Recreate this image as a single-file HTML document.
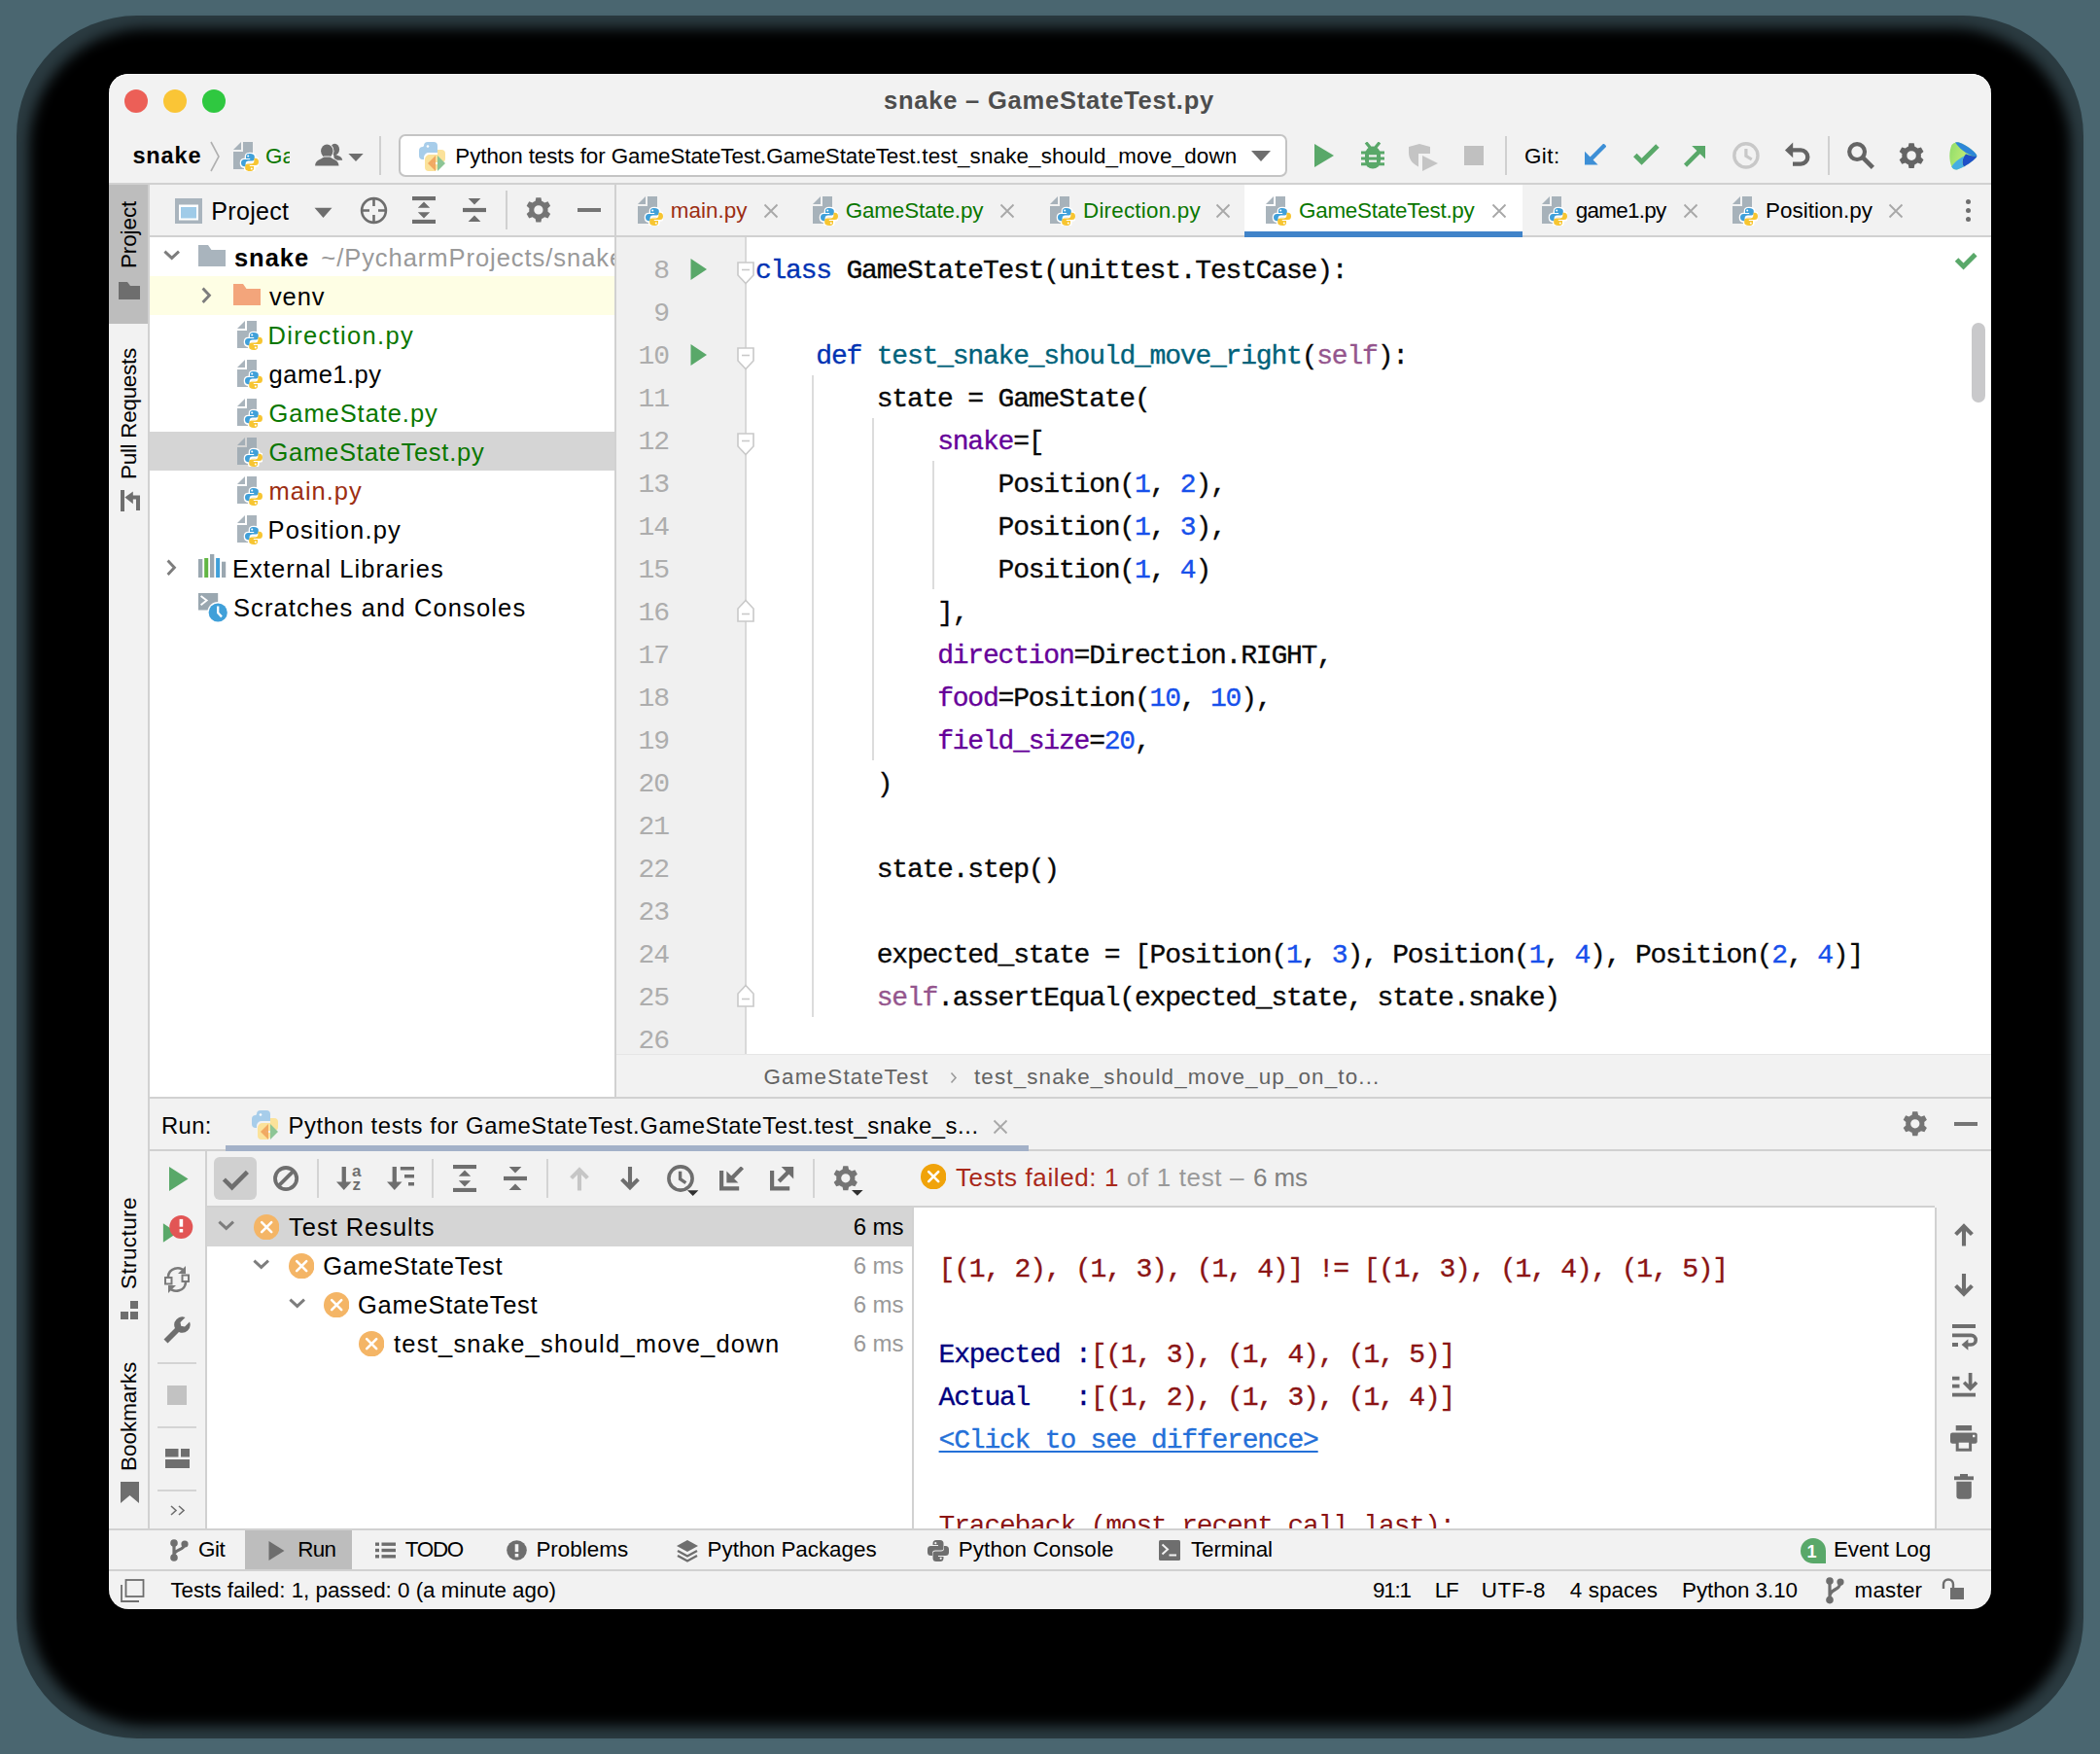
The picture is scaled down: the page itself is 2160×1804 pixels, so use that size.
<!DOCTYPE html>
<html><head><meta charset="utf-8"><title>snake - GameStateTest.py</title>
<style>
html,body{margin:0;padding:0;}
body{width:2160px;height:1804px;position:relative;overflow:hidden;background:#4a6670;font-family:"Liberation Sans",sans-serif;}
#win div,#win svg,#win span.t{position:absolute;}
span.t{white-space:pre;display:block;}
#win{position:absolute;left:0;top:0;width:2160px;height:1804px;}

#shadowA{position:absolute;left:17px;top:16px;width:2126px;height:1772px;border-radius:124px;background:rgba(0,0,0,0.42);}
#shadow{position:absolute;left:60px;top:59px;width:2040px;height:1686px;border-radius:92px;background:#000;box-shadow:0 0 14px 30px #000;}
#frame{position:absolute;left:112px;top:76px;width:1936px;height:1579px;border-radius:20px;background:#f2f2f2;overflow:hidden;box-shadow:inset 0 1px 0 #fff;}

</style></head><body>

<div id="shadowA"></div><div id="shadow"></div><div id="frame"></div>
<div id="win">
<div style="left:128px;top:92px;width:24px;height:24px;background:#ec5f57;border-radius:50%;"></div>
<div style="left:168px;top:92px;width:24px;height:24px;background:#fac536;border-radius:50%;"></div>
<div style="left:208px;top:92px;width:24px;height:24px;background:#2fc840;border-radius:50%;"></div>
<div style="left:112px;top:188px;width:1936px;height:2px;background:#d1d1d1;"></div>
<svg style="left:214px;top:144px;" width="14" height="34" viewBox="0 0 14 34"><path d="M3 2 L11 17 L3 32" fill="none" stroke="#b0b0b0" stroke-width="1.6"/></svg>
<svg style="left:322px;top:146px;" width="54" height="28" viewBox="0 0 54 28"><g fill="#6e6e6e"><ellipse cx="22.3" cy="7.6" rx="4.8" ry="5.8"/><path d="M21 12.5 C26 14 30 15.2 30.2 18.8 L22 18.8 Z"/><ellipse cx="14.3" cy="9.3" rx="7.2" ry="7.9" fill="#f2f2f2"/><ellipse cx="14.3" cy="9.3" rx="6.2" ry="6.9"/><path d="M1 25.6 C1 18.4 7 17.4 11.4 14.6 L17.2 14.6 C21.6 17.4 27.6 18.4 27.6 25.6 Z" fill="#f2f2f2"/><path d="M2.1 24.4 C2.3 19.2 7.6 18 11.4 15.6 L17.2 15.6 C21 18 26.3 19.2 26.5 24.4 Z"/><path d="M36.4 12.1 H51.7 L44 20 Z"/></g></svg>
<div style="left:390px;top:140px;width:2px;height:40px;background:#d0d0d0;"></div>
<div style="left:410px;top:138px;width:914px;height:43.5px;background:#fff;border:2px solid #c4c4c4;box-sizing:border-box;border-radius:7px;"></div>
<svg style="left:1285px;top:152px;" width="24" height="16" viewBox="0 0 24 16"><path d="M2 3 L22 3 L12 14 Z" fill="#6e6e6e"/></svg>
<div style="left:152px;top:190px;width:2px;height:1384px;background:#d1d1d1;"></div>
<div style="left:112px;top:190px;width:40px;height:143px;background:#bdbdbd;"></div>
<svg style="left:122px;top:290px;" width="22" height="18" viewBox="0 0 22 18"><path d="M0 0 H9 L12 4 H22 V18 H0 Z" fill="#6e6e6e"/></svg>
<svg style="left:124px;top:503.7px;" width="20" height="22.3" viewBox="0 0 20 22.3"><rect x="0" y="0" width="4" height="22.3" fill="#6e6e6e"/><path d="M18 21 V7.5 H11" stroke="#6e6e6e" stroke-width="4" fill="none"/><path d="M4.4 7.6 L12.8 1.4 V14.2 Z" fill="#6e6e6e"/></svg>
<svg style="left:124px;top:1338px;" width="19" height="19" viewBox="0 0 19 19"><rect x="10" y="0" width="8" height="8" fill="#6e6e6e"/><rect x="0" y="11" width="8" height="8" fill="#6e6e6e"/><rect x="10" y="11" width="8" height="8" fill="#6e6e6e"/></svg>
<svg style="left:124px;top:1524px;" width="19" height="22" viewBox="0 0 19 22"><path d="M0 0 H19 V22 L9.5 14 L0 22 Z" fill="#6e6e6e"/></svg>
<div style="left:154px;top:242px;width:478px;height:2px;background:#d1d1d1;"></div>
<div style="left:632px;top:190px;width:2px;height:940px;background:#d1d1d1;"></div>
<svg style="left:180px;top:204px;" width="28" height="26" viewBox="0 0 28 26"><rect x="0" y="0" width="28" height="26" fill="#a9b4bd"/><rect x="4" y="6.5" width="20" height="16" fill="#fff"/><rect x="6" y="9" width="16" height="11.5" fill="#9fcbe8"/></svg>
<svg style="left:323px;top:213px;" width="19" height="12" viewBox="0 0 19 12"><path d="M0.5 0.8 L18.5 0.8 L9.5 11 Z" fill="#6e6e6e"/></svg>
<svg style="left:369.5px;top:201.5px;" width="29" height="29" viewBox="0 0 29 29"><circle cx="14.5" cy="14.5" r="12.4" fill="none" stroke="#6e6e6e" stroke-width="2.6"/><path d="M14.5 1 V10 M14.5 19 V28 M1 14.5 H10 M19 14.5 H28" stroke="#6e6e6e" stroke-width="2.6"/></svg>
<svg style="left:424px;top:202px;" width="24" height="28" viewBox="0 0 24 28"><rect x="0" y="0" width="24" height="4.1" fill="#6e6e6e"/><rect x="0" y="23.9" width="24" height="4.1" fill="#6e6e6e"/><path d="M12 5.6 L18.2 11.8 H5.8 Z M12 22.4 L18.2 16.2 H5.8 Z" fill="#6e6e6e"/></svg>
<svg style="left:476px;top:204px;" width="24" height="24" viewBox="0 0 24 24"><rect x="0" y="9.9" width="24" height="4.2" fill="#6e6e6e"/><path d="M12 6.4 L18.4 0 H5.6 Z M12 17.6 L18.4 24 H5.6 Z" fill="#6e6e6e"/></svg>
<div style="left:520px;top:196px;width:2px;height:40px;background:#d0d0d0;"></div>
<svg style="left:540.1px;top:202.1px;" width="27.8" height="27.8" viewBox="0 0 27.8 27.8"><path d="M10.62 4.80 L11.35 1.25 L16.45 1.25 L17.18 4.80 A9.68 9.68 0 0 1 20.14 6.51 L23.58 5.37 L26.13 9.79 L23.42 12.19 A9.68 9.68 0 0 1 23.42 15.61 L26.13 18.01 L23.58 22.43 L20.14 21.29 A9.68 9.68 0 0 1 17.18 23.00 L16.45 26.55 L11.35 26.55 L10.62 23.00 A9.68 9.68 0 0 1 7.66 21.29 L4.22 22.43 L1.67 18.01 L4.38 15.61 A9.68 9.68 0 0 1 4.38 12.19 L1.67 9.79 L4.22 5.37 L7.66 6.51 A9.68 9.68 0 0 1 10.62 4.80 Z M9.26 13.9 a4.64 4.64 0 1 0 9.29 0 a4.64 4.64 0 1 0 -9.29 0 Z" fill="#757575" fill-rule="evenodd"/></svg>
<div style="left:594px;top:214px;width:24px;height:4px;background:#757575;"></div>
<div style="left:154px;top:244px;width:478px;height:884px;background:#fff;"></div>
<div style="left:154px;top:284px;width:478px;height:40px;background:#fefee4;"></div>
<div style="left:154px;top:444px;width:478px;height:40px;background:#d5d5d5;"></div>
<svg style="left:168px;top:257px;" width="18" height="11" viewBox="0 0 18 11"><path d="M1.4 1.6 L8.7 8.4 L16 1.6" stroke="#7d7d7d" stroke-width="2.9" fill="none"/></svg>
<svg style="left:204px;top:252px;" width="28" height="22" viewBox="0 0 28 22"><path d="M0 0 L10 0 L13.5 5 L28 5 L28 22 L0 22 Z" fill="#a9b4bd"/></svg>
<svg style="left:207px;top:294.5px;" width="11" height="18" viewBox="0 0 11 18"><path d="M1.6 1.4 L8.4 8.7 L1.6 16" stroke="#7d7d7d" stroke-width="2.9" fill="none"/></svg>
<svg style="left:240px;top:292px;" width="28" height="22" viewBox="0 0 28 22"><path d="M0 0 L10 0 L13.5 5 L28 5 L28 22 L0 22 Z" fill="#f3a57b"/></svg>
<svg style="left:244px;top:330px;" width="26" height="30" viewBox="0 0 26 30"><path d="M8 0 L0 8 L8 8 Z" fill="#9aa7b0" opacity="0.85"/><path d="M10 0 H20 V28 H0 V10 H10 Z" fill="#9aa7b0" opacity="0.85"/><g transform="translate(8,12)"><path d="M8.8 0 C5.6 0 5 1.4 5 3 V5 H9.2 V6 H3.2 C1.2 6 0 7.4 0 9.6 C0 11.8 1.2 13.2 3 13.2 H4.6 V10.6 C4.6 8.8 5.9 7.5 7.6 7.5 H11.4 C12.8 7.5 13.8 6.4 13.8 5 V3 C13.8 1.4 12.4 0 8.8 0 Z" fill="#fff" stroke="#fff" stroke-width="3" transform="translate(0.2,0.2)"/><path d="M8.8 0 C5.6 0 5 1.4 5 3 V5 H9.2 V6 H3.2 C1.2 6 0 7.4 0 9.6 C0 11.8 1.2 13.2 3 13.2 H4.6 V10.6 C4.6 8.8 5.9 7.5 7.6 7.5 H11.4 C12.8 7.5 13.8 6.4 13.8 5 V3 C13.8 1.4 12.4 0 8.8 0 Z" fill="#fff" stroke="#fff" stroke-width="3" transform="rotate(180 9 9) translate(-0.2,-0.2)"/><path d="M8.8 0 C5.6 0 5 1.4 5 3 V5 H9.2 V6 H3.2 C1.2 6 0 7.4 0 9.6 C0 11.8 1.2 13.2 3 13.2 H4.6 V10.6 C4.6 8.8 5.9 7.5 7.6 7.5 H11.4 C12.8 7.5 13.8 6.4 13.8 5 V3 C13.8 1.4 12.4 0 8.8 0 Z" fill="#40a0d9"/><path d="M8.8 0 C5.6 0 5 1.4 5 3 V5 H9.2 V6 H3.2 C1.2 6 0 7.4 0 9.6 C0 11.8 1.2 13.2 3 13.2 H4.6 V10.6 C4.6 8.8 5.9 7.5 7.6 7.5 H11.4 C12.8 7.5 13.8 6.4 13.8 5 V3 C13.8 1.4 12.4 0 8.8 0 Z" fill="#f7c531" transform="rotate(180 9 9)"/><circle cx="7.2" cy="2.6" r="1" fill="#fff"/><circle cx="10.8" cy="15.4" r="1" fill="#fff"/></g></svg>
<svg style="left:244px;top:370px;" width="26" height="30" viewBox="0 0 26 30"><path d="M8 0 L0 8 L8 8 Z" fill="#9aa7b0" opacity="0.85"/><path d="M10 0 H20 V28 H0 V10 H10 Z" fill="#9aa7b0" opacity="0.85"/><g transform="translate(8,12)"><path d="M8.8 0 C5.6 0 5 1.4 5 3 V5 H9.2 V6 H3.2 C1.2 6 0 7.4 0 9.6 C0 11.8 1.2 13.2 3 13.2 H4.6 V10.6 C4.6 8.8 5.9 7.5 7.6 7.5 H11.4 C12.8 7.5 13.8 6.4 13.8 5 V3 C13.8 1.4 12.4 0 8.8 0 Z" fill="#fff" stroke="#fff" stroke-width="3" transform="translate(0.2,0.2)"/><path d="M8.8 0 C5.6 0 5 1.4 5 3 V5 H9.2 V6 H3.2 C1.2 6 0 7.4 0 9.6 C0 11.8 1.2 13.2 3 13.2 H4.6 V10.6 C4.6 8.8 5.9 7.5 7.6 7.5 H11.4 C12.8 7.5 13.8 6.4 13.8 5 V3 C13.8 1.4 12.4 0 8.8 0 Z" fill="#fff" stroke="#fff" stroke-width="3" transform="rotate(180 9 9) translate(-0.2,-0.2)"/><path d="M8.8 0 C5.6 0 5 1.4 5 3 V5 H9.2 V6 H3.2 C1.2 6 0 7.4 0 9.6 C0 11.8 1.2 13.2 3 13.2 H4.6 V10.6 C4.6 8.8 5.9 7.5 7.6 7.5 H11.4 C12.8 7.5 13.8 6.4 13.8 5 V3 C13.8 1.4 12.4 0 8.8 0 Z" fill="#40a0d9"/><path d="M8.8 0 C5.6 0 5 1.4 5 3 V5 H9.2 V6 H3.2 C1.2 6 0 7.4 0 9.6 C0 11.8 1.2 13.2 3 13.2 H4.6 V10.6 C4.6 8.8 5.9 7.5 7.6 7.5 H11.4 C12.8 7.5 13.8 6.4 13.8 5 V3 C13.8 1.4 12.4 0 8.8 0 Z" fill="#f7c531" transform="rotate(180 9 9)"/><circle cx="7.2" cy="2.6" r="1" fill="#fff"/><circle cx="10.8" cy="15.4" r="1" fill="#fff"/></g></svg>
<svg style="left:244px;top:410px;" width="26" height="30" viewBox="0 0 26 30"><path d="M8 0 L0 8 L8 8 Z" fill="#9aa7b0" opacity="0.85"/><path d="M10 0 H20 V28 H0 V10 H10 Z" fill="#9aa7b0" opacity="0.85"/><g transform="translate(8,12)"><path d="M8.8 0 C5.6 0 5 1.4 5 3 V5 H9.2 V6 H3.2 C1.2 6 0 7.4 0 9.6 C0 11.8 1.2 13.2 3 13.2 H4.6 V10.6 C4.6 8.8 5.9 7.5 7.6 7.5 H11.4 C12.8 7.5 13.8 6.4 13.8 5 V3 C13.8 1.4 12.4 0 8.8 0 Z" fill="#fff" stroke="#fff" stroke-width="3" transform="translate(0.2,0.2)"/><path d="M8.8 0 C5.6 0 5 1.4 5 3 V5 H9.2 V6 H3.2 C1.2 6 0 7.4 0 9.6 C0 11.8 1.2 13.2 3 13.2 H4.6 V10.6 C4.6 8.8 5.9 7.5 7.6 7.5 H11.4 C12.8 7.5 13.8 6.4 13.8 5 V3 C13.8 1.4 12.4 0 8.8 0 Z" fill="#fff" stroke="#fff" stroke-width="3" transform="rotate(180 9 9) translate(-0.2,-0.2)"/><path d="M8.8 0 C5.6 0 5 1.4 5 3 V5 H9.2 V6 H3.2 C1.2 6 0 7.4 0 9.6 C0 11.8 1.2 13.2 3 13.2 H4.6 V10.6 C4.6 8.8 5.9 7.5 7.6 7.5 H11.4 C12.8 7.5 13.8 6.4 13.8 5 V3 C13.8 1.4 12.4 0 8.8 0 Z" fill="#40a0d9"/><path d="M8.8 0 C5.6 0 5 1.4 5 3 V5 H9.2 V6 H3.2 C1.2 6 0 7.4 0 9.6 C0 11.8 1.2 13.2 3 13.2 H4.6 V10.6 C4.6 8.8 5.9 7.5 7.6 7.5 H11.4 C12.8 7.5 13.8 6.4 13.8 5 V3 C13.8 1.4 12.4 0 8.8 0 Z" fill="#f7c531" transform="rotate(180 9 9)"/><circle cx="7.2" cy="2.6" r="1" fill="#fff"/><circle cx="10.8" cy="15.4" r="1" fill="#fff"/></g></svg>
<svg style="left:244px;top:450px;" width="26" height="30" viewBox="0 0 26 30"><path d="M8 0 L0 8 L8 8 Z" fill="#9aa7b0" opacity="0.85"/><path d="M10 0 H20 V28 H0 V10 H10 Z" fill="#9aa7b0" opacity="0.85"/><g transform="translate(8,12)"><path d="M8.8 0 C5.6 0 5 1.4 5 3 V5 H9.2 V6 H3.2 C1.2 6 0 7.4 0 9.6 C0 11.8 1.2 13.2 3 13.2 H4.6 V10.6 C4.6 8.8 5.9 7.5 7.6 7.5 H11.4 C12.8 7.5 13.8 6.4 13.8 5 V3 C13.8 1.4 12.4 0 8.8 0 Z" fill="#fff" stroke="#fff" stroke-width="3" transform="translate(0.2,0.2)"/><path d="M8.8 0 C5.6 0 5 1.4 5 3 V5 H9.2 V6 H3.2 C1.2 6 0 7.4 0 9.6 C0 11.8 1.2 13.2 3 13.2 H4.6 V10.6 C4.6 8.8 5.9 7.5 7.6 7.5 H11.4 C12.8 7.5 13.8 6.4 13.8 5 V3 C13.8 1.4 12.4 0 8.8 0 Z" fill="#fff" stroke="#fff" stroke-width="3" transform="rotate(180 9 9) translate(-0.2,-0.2)"/><path d="M8.8 0 C5.6 0 5 1.4 5 3 V5 H9.2 V6 H3.2 C1.2 6 0 7.4 0 9.6 C0 11.8 1.2 13.2 3 13.2 H4.6 V10.6 C4.6 8.8 5.9 7.5 7.6 7.5 H11.4 C12.8 7.5 13.8 6.4 13.8 5 V3 C13.8 1.4 12.4 0 8.8 0 Z" fill="#40a0d9"/><path d="M8.8 0 C5.6 0 5 1.4 5 3 V5 H9.2 V6 H3.2 C1.2 6 0 7.4 0 9.6 C0 11.8 1.2 13.2 3 13.2 H4.6 V10.6 C4.6 8.8 5.9 7.5 7.6 7.5 H11.4 C12.8 7.5 13.8 6.4 13.8 5 V3 C13.8 1.4 12.4 0 8.8 0 Z" fill="#f7c531" transform="rotate(180 9 9)"/><circle cx="7.2" cy="2.6" r="1" fill="#fff"/><circle cx="10.8" cy="15.4" r="1" fill="#fff"/></g></svg>
<svg style="left:244px;top:490px;" width="26" height="30" viewBox="0 0 26 30"><path d="M8 0 L0 8 L8 8 Z" fill="#9aa7b0" opacity="0.85"/><path d="M10 0 H20 V28 H0 V10 H10 Z" fill="#9aa7b0" opacity="0.85"/><g transform="translate(8,12)"><path d="M8.8 0 C5.6 0 5 1.4 5 3 V5 H9.2 V6 H3.2 C1.2 6 0 7.4 0 9.6 C0 11.8 1.2 13.2 3 13.2 H4.6 V10.6 C4.6 8.8 5.9 7.5 7.6 7.5 H11.4 C12.8 7.5 13.8 6.4 13.8 5 V3 C13.8 1.4 12.4 0 8.8 0 Z" fill="#fff" stroke="#fff" stroke-width="3" transform="translate(0.2,0.2)"/><path d="M8.8 0 C5.6 0 5 1.4 5 3 V5 H9.2 V6 H3.2 C1.2 6 0 7.4 0 9.6 C0 11.8 1.2 13.2 3 13.2 H4.6 V10.6 C4.6 8.8 5.9 7.5 7.6 7.5 H11.4 C12.8 7.5 13.8 6.4 13.8 5 V3 C13.8 1.4 12.4 0 8.8 0 Z" fill="#fff" stroke="#fff" stroke-width="3" transform="rotate(180 9 9) translate(-0.2,-0.2)"/><path d="M8.8 0 C5.6 0 5 1.4 5 3 V5 H9.2 V6 H3.2 C1.2 6 0 7.4 0 9.6 C0 11.8 1.2 13.2 3 13.2 H4.6 V10.6 C4.6 8.8 5.9 7.5 7.6 7.5 H11.4 C12.8 7.5 13.8 6.4 13.8 5 V3 C13.8 1.4 12.4 0 8.8 0 Z" fill="#40a0d9"/><path d="M8.8 0 C5.6 0 5 1.4 5 3 V5 H9.2 V6 H3.2 C1.2 6 0 7.4 0 9.6 C0 11.8 1.2 13.2 3 13.2 H4.6 V10.6 C4.6 8.8 5.9 7.5 7.6 7.5 H11.4 C12.8 7.5 13.8 6.4 13.8 5 V3 C13.8 1.4 12.4 0 8.8 0 Z" fill="#f7c531" transform="rotate(180 9 9)"/><circle cx="7.2" cy="2.6" r="1" fill="#fff"/><circle cx="10.8" cy="15.4" r="1" fill="#fff"/></g></svg>
<svg style="left:244px;top:530px;" width="26" height="30" viewBox="0 0 26 30"><path d="M8 0 L0 8 L8 8 Z" fill="#9aa7b0" opacity="0.85"/><path d="M10 0 H20 V28 H0 V10 H10 Z" fill="#9aa7b0" opacity="0.85"/><g transform="translate(8,12)"><path d="M8.8 0 C5.6 0 5 1.4 5 3 V5 H9.2 V6 H3.2 C1.2 6 0 7.4 0 9.6 C0 11.8 1.2 13.2 3 13.2 H4.6 V10.6 C4.6 8.8 5.9 7.5 7.6 7.5 H11.4 C12.8 7.5 13.8 6.4 13.8 5 V3 C13.8 1.4 12.4 0 8.8 0 Z" fill="#fff" stroke="#fff" stroke-width="3" transform="translate(0.2,0.2)"/><path d="M8.8 0 C5.6 0 5 1.4 5 3 V5 H9.2 V6 H3.2 C1.2 6 0 7.4 0 9.6 C0 11.8 1.2 13.2 3 13.2 H4.6 V10.6 C4.6 8.8 5.9 7.5 7.6 7.5 H11.4 C12.8 7.5 13.8 6.4 13.8 5 V3 C13.8 1.4 12.4 0 8.8 0 Z" fill="#fff" stroke="#fff" stroke-width="3" transform="rotate(180 9 9) translate(-0.2,-0.2)"/><path d="M8.8 0 C5.6 0 5 1.4 5 3 V5 H9.2 V6 H3.2 C1.2 6 0 7.4 0 9.6 C0 11.8 1.2 13.2 3 13.2 H4.6 V10.6 C4.6 8.8 5.9 7.5 7.6 7.5 H11.4 C12.8 7.5 13.8 6.4 13.8 5 V3 C13.8 1.4 12.4 0 8.8 0 Z" fill="#40a0d9"/><path d="M8.8 0 C5.6 0 5 1.4 5 3 V5 H9.2 V6 H3.2 C1.2 6 0 7.4 0 9.6 C0 11.8 1.2 13.2 3 13.2 H4.6 V10.6 C4.6 8.8 5.9 7.5 7.6 7.5 H11.4 C12.8 7.5 13.8 6.4 13.8 5 V3 C13.8 1.4 12.4 0 8.8 0 Z" fill="#f7c531" transform="rotate(180 9 9)"/><circle cx="7.2" cy="2.6" r="1" fill="#fff"/><circle cx="10.8" cy="15.4" r="1" fill="#fff"/></g></svg>
<svg style="left:171px;top:574.5px;" width="11" height="18" viewBox="0 0 11 18"><path d="M1.6 1.4 L8.4 8.7 L1.6 16" stroke="#7d7d7d" stroke-width="2.9" fill="none"/></svg>
<svg style="left:203.9px;top:570px;" width="29" height="24" viewBox="0 0 29 24"><rect x="0" y="5" width="4.3" height="19" fill="#9aa7b0"/><rect x="6.2" y="4" width="4" height="20" fill="#62b543"/><rect x="12" y="0" width="4.3" height="24" fill="#9aa7b0"/><rect x="18.1" y="4" width="4" height="20" fill="#40a0d9"/><rect x="24" y="7.7" width="4.2" height="16.3" fill="#9aa7b0"/></svg>
<svg style="left:203.9px;top:609.7px;" width="32" height="31" viewBox="0 0 32 31"><rect x="0" y="0" width="20.2" height="17.5" fill="#9aa7b0"/><path d="M2.6 3 L8.6 7.6 L2.6 12.2" stroke="#fff" stroke-width="1.9" fill="none"/><circle cx="20.2" cy="20" r="10.9" fill="#fff"/><circle cx="20.2" cy="20" r="9.6" fill="#40a0d9"/><path d="M20.2 13.6 V20.4 L24 24.4" stroke="#fff" stroke-width="2.3" fill="none"/></svg>
<div style="left:634px;top:242px;width:1414px;height:2px;background:#d1d1d1;"></div>
<div style="left:1280px;top:190px;width:286px;height:52px;background:#fff;"></div>
<div style="left:1280px;top:238px;width:286px;height:6px;background:#4083c9;"></div>
<svg style="left:655.5px;top:202px;" width="26" height="30" viewBox="0 0 26 30"><path d="M8 0 L0 8 L8 8 Z" fill="#9aa7b0" opacity="0.85"/><path d="M10 0 H20 V28 H0 V10 H10 Z" fill="#9aa7b0" opacity="0.85"/><g transform="translate(8,12)"><path d="M8.8 0 C5.6 0 5 1.4 5 3 V5 H9.2 V6 H3.2 C1.2 6 0 7.4 0 9.6 C0 11.8 1.2 13.2 3 13.2 H4.6 V10.6 C4.6 8.8 5.9 7.5 7.6 7.5 H11.4 C12.8 7.5 13.8 6.4 13.8 5 V3 C13.8 1.4 12.4 0 8.8 0 Z" fill="#fff" stroke="#fff" stroke-width="3" transform="translate(0.2,0.2)"/><path d="M8.8 0 C5.6 0 5 1.4 5 3 V5 H9.2 V6 H3.2 C1.2 6 0 7.4 0 9.6 C0 11.8 1.2 13.2 3 13.2 H4.6 V10.6 C4.6 8.8 5.9 7.5 7.6 7.5 H11.4 C12.8 7.5 13.8 6.4 13.8 5 V3 C13.8 1.4 12.4 0 8.8 0 Z" fill="#fff" stroke="#fff" stroke-width="3" transform="rotate(180 9 9) translate(-0.2,-0.2)"/><path d="M8.8 0 C5.6 0 5 1.4 5 3 V5 H9.2 V6 H3.2 C1.2 6 0 7.4 0 9.6 C0 11.8 1.2 13.2 3 13.2 H4.6 V10.6 C4.6 8.8 5.9 7.5 7.6 7.5 H11.4 C12.8 7.5 13.8 6.4 13.8 5 V3 C13.8 1.4 12.4 0 8.8 0 Z" fill="#40a0d9"/><path d="M8.8 0 C5.6 0 5 1.4 5 3 V5 H9.2 V6 H3.2 C1.2 6 0 7.4 0 9.6 C0 11.8 1.2 13.2 3 13.2 H4.6 V10.6 C4.6 8.8 5.9 7.5 7.6 7.5 H11.4 C12.8 7.5 13.8 6.4 13.8 5 V3 C13.8 1.4 12.4 0 8.8 0 Z" fill="#f7c531" transform="rotate(180 9 9)"/><circle cx="7.2" cy="2.6" r="1" fill="#fff"/><circle cx="10.8" cy="15.4" r="1" fill="#fff"/></g></svg>
<svg style="left:785px;top:209px;" width="16" height="16" viewBox="0 0 16 16"><path d="M1.5 1.5 L14.5 14.5 M14.5 1.5 L1.5 14.5" stroke="#a8a8a8" stroke-width="1.8" fill="none"/></svg>
<svg style="left:836px;top:202px;" width="26" height="30" viewBox="0 0 26 30"><path d="M8 0 L0 8 L8 8 Z" fill="#9aa7b0" opacity="0.85"/><path d="M10 0 H20 V28 H0 V10 H10 Z" fill="#9aa7b0" opacity="0.85"/><g transform="translate(8,12)"><path d="M8.8 0 C5.6 0 5 1.4 5 3 V5 H9.2 V6 H3.2 C1.2 6 0 7.4 0 9.6 C0 11.8 1.2 13.2 3 13.2 H4.6 V10.6 C4.6 8.8 5.9 7.5 7.6 7.5 H11.4 C12.8 7.5 13.8 6.4 13.8 5 V3 C13.8 1.4 12.4 0 8.8 0 Z" fill="#fff" stroke="#fff" stroke-width="3" transform="translate(0.2,0.2)"/><path d="M8.8 0 C5.6 0 5 1.4 5 3 V5 H9.2 V6 H3.2 C1.2 6 0 7.4 0 9.6 C0 11.8 1.2 13.2 3 13.2 H4.6 V10.6 C4.6 8.8 5.9 7.5 7.6 7.5 H11.4 C12.8 7.5 13.8 6.4 13.8 5 V3 C13.8 1.4 12.4 0 8.8 0 Z" fill="#fff" stroke="#fff" stroke-width="3" transform="rotate(180 9 9) translate(-0.2,-0.2)"/><path d="M8.8 0 C5.6 0 5 1.4 5 3 V5 H9.2 V6 H3.2 C1.2 6 0 7.4 0 9.6 C0 11.8 1.2 13.2 3 13.2 H4.6 V10.6 C4.6 8.8 5.9 7.5 7.6 7.5 H11.4 C12.8 7.5 13.8 6.4 13.8 5 V3 C13.8 1.4 12.4 0 8.8 0 Z" fill="#40a0d9"/><path d="M8.8 0 C5.6 0 5 1.4 5 3 V5 H9.2 V6 H3.2 C1.2 6 0 7.4 0 9.6 C0 11.8 1.2 13.2 3 13.2 H4.6 V10.6 C4.6 8.8 5.9 7.5 7.6 7.5 H11.4 C12.8 7.5 13.8 6.4 13.8 5 V3 C13.8 1.4 12.4 0 8.8 0 Z" fill="#f7c531" transform="rotate(180 9 9)"/><circle cx="7.2" cy="2.6" r="1" fill="#fff"/><circle cx="10.8" cy="15.4" r="1" fill="#fff"/></g></svg>
<svg style="left:1028px;top:209px;" width="16" height="16" viewBox="0 0 16 16"><path d="M1.5 1.5 L14.5 14.5 M14.5 1.5 L1.5 14.5" stroke="#a8a8a8" stroke-width="1.8" fill="none"/></svg>
<svg style="left:1080px;top:202px;" width="26" height="30" viewBox="0 0 26 30"><path d="M8 0 L0 8 L8 8 Z" fill="#9aa7b0" opacity="0.85"/><path d="M10 0 H20 V28 H0 V10 H10 Z" fill="#9aa7b0" opacity="0.85"/><g transform="translate(8,12)"><path d="M8.8 0 C5.6 0 5 1.4 5 3 V5 H9.2 V6 H3.2 C1.2 6 0 7.4 0 9.6 C0 11.8 1.2 13.2 3 13.2 H4.6 V10.6 C4.6 8.8 5.9 7.5 7.6 7.5 H11.4 C12.8 7.5 13.8 6.4 13.8 5 V3 C13.8 1.4 12.4 0 8.8 0 Z" fill="#fff" stroke="#fff" stroke-width="3" transform="translate(0.2,0.2)"/><path d="M8.8 0 C5.6 0 5 1.4 5 3 V5 H9.2 V6 H3.2 C1.2 6 0 7.4 0 9.6 C0 11.8 1.2 13.2 3 13.2 H4.6 V10.6 C4.6 8.8 5.9 7.5 7.6 7.5 H11.4 C12.8 7.5 13.8 6.4 13.8 5 V3 C13.8 1.4 12.4 0 8.8 0 Z" fill="#fff" stroke="#fff" stroke-width="3" transform="rotate(180 9 9) translate(-0.2,-0.2)"/><path d="M8.8 0 C5.6 0 5 1.4 5 3 V5 H9.2 V6 H3.2 C1.2 6 0 7.4 0 9.6 C0 11.8 1.2 13.2 3 13.2 H4.6 V10.6 C4.6 8.8 5.9 7.5 7.6 7.5 H11.4 C12.8 7.5 13.8 6.4 13.8 5 V3 C13.8 1.4 12.4 0 8.8 0 Z" fill="#40a0d9"/><path d="M8.8 0 C5.6 0 5 1.4 5 3 V5 H9.2 V6 H3.2 C1.2 6 0 7.4 0 9.6 C0 11.8 1.2 13.2 3 13.2 H4.6 V10.6 C4.6 8.8 5.9 7.5 7.6 7.5 H11.4 C12.8 7.5 13.8 6.4 13.8 5 V3 C13.8 1.4 12.4 0 8.8 0 Z" fill="#f7c531" transform="rotate(180 9 9)"/><circle cx="7.2" cy="2.6" r="1" fill="#fff"/><circle cx="10.8" cy="15.4" r="1" fill="#fff"/></g></svg>
<svg style="left:1250px;top:209px;" width="16" height="16" viewBox="0 0 16 16"><path d="M1.5 1.5 L14.5 14.5 M14.5 1.5 L1.5 14.5" stroke="#a8a8a8" stroke-width="1.8" fill="none"/></svg>
<svg style="left:1301.7px;top:202px;" width="26" height="30" viewBox="0 0 26 30"><path d="M8 0 L0 8 L8 8 Z" fill="#9aa7b0" opacity="0.85"/><path d="M10 0 H20 V28 H0 V10 H10 Z" fill="#9aa7b0" opacity="0.85"/><g transform="translate(8,12)"><path d="M8.8 0 C5.6 0 5 1.4 5 3 V5 H9.2 V6 H3.2 C1.2 6 0 7.4 0 9.6 C0 11.8 1.2 13.2 3 13.2 H4.6 V10.6 C4.6 8.8 5.9 7.5 7.6 7.5 H11.4 C12.8 7.5 13.8 6.4 13.8 5 V3 C13.8 1.4 12.4 0 8.8 0 Z" fill="#fff" stroke="#fff" stroke-width="3" transform="translate(0.2,0.2)"/><path d="M8.8 0 C5.6 0 5 1.4 5 3 V5 H9.2 V6 H3.2 C1.2 6 0 7.4 0 9.6 C0 11.8 1.2 13.2 3 13.2 H4.6 V10.6 C4.6 8.8 5.9 7.5 7.6 7.5 H11.4 C12.8 7.5 13.8 6.4 13.8 5 V3 C13.8 1.4 12.4 0 8.8 0 Z" fill="#fff" stroke="#fff" stroke-width="3" transform="rotate(180 9 9) translate(-0.2,-0.2)"/><path d="M8.8 0 C5.6 0 5 1.4 5 3 V5 H9.2 V6 H3.2 C1.2 6 0 7.4 0 9.6 C0 11.8 1.2 13.2 3 13.2 H4.6 V10.6 C4.6 8.8 5.9 7.5 7.6 7.5 H11.4 C12.8 7.5 13.8 6.4 13.8 5 V3 C13.8 1.4 12.4 0 8.8 0 Z" fill="#40a0d9"/><path d="M8.8 0 C5.6 0 5 1.4 5 3 V5 H9.2 V6 H3.2 C1.2 6 0 7.4 0 9.6 C0 11.8 1.2 13.2 3 13.2 H4.6 V10.6 C4.6 8.8 5.9 7.5 7.6 7.5 H11.4 C12.8 7.5 13.8 6.4 13.8 5 V3 C13.8 1.4 12.4 0 8.8 0 Z" fill="#f7c531" transform="rotate(180 9 9)"/><circle cx="7.2" cy="2.6" r="1" fill="#fff"/><circle cx="10.8" cy="15.4" r="1" fill="#fff"/></g></svg>
<svg style="left:1534px;top:209px;" width="16" height="16" viewBox="0 0 16 16"><path d="M1.5 1.5 L14.5 14.5 M14.5 1.5 L1.5 14.5" stroke="#a8a8a8" stroke-width="1.8" fill="none"/></svg>
<svg style="left:1585.7px;top:202px;" width="26" height="30" viewBox="0 0 26 30"><path d="M8 0 L0 8 L8 8 Z" fill="#9aa7b0" opacity="0.85"/><path d="M10 0 H20 V28 H0 V10 H10 Z" fill="#9aa7b0" opacity="0.85"/><g transform="translate(8,12)"><path d="M8.8 0 C5.6 0 5 1.4 5 3 V5 H9.2 V6 H3.2 C1.2 6 0 7.4 0 9.6 C0 11.8 1.2 13.2 3 13.2 H4.6 V10.6 C4.6 8.8 5.9 7.5 7.6 7.5 H11.4 C12.8 7.5 13.8 6.4 13.8 5 V3 C13.8 1.4 12.4 0 8.8 0 Z" fill="#fff" stroke="#fff" stroke-width="3" transform="translate(0.2,0.2)"/><path d="M8.8 0 C5.6 0 5 1.4 5 3 V5 H9.2 V6 H3.2 C1.2 6 0 7.4 0 9.6 C0 11.8 1.2 13.2 3 13.2 H4.6 V10.6 C4.6 8.8 5.9 7.5 7.6 7.5 H11.4 C12.8 7.5 13.8 6.4 13.8 5 V3 C13.8 1.4 12.4 0 8.8 0 Z" fill="#fff" stroke="#fff" stroke-width="3" transform="rotate(180 9 9) translate(-0.2,-0.2)"/><path d="M8.8 0 C5.6 0 5 1.4 5 3 V5 H9.2 V6 H3.2 C1.2 6 0 7.4 0 9.6 C0 11.8 1.2 13.2 3 13.2 H4.6 V10.6 C4.6 8.8 5.9 7.5 7.6 7.5 H11.4 C12.8 7.5 13.8 6.4 13.8 5 V3 C13.8 1.4 12.4 0 8.8 0 Z" fill="#40a0d9"/><path d="M8.8 0 C5.6 0 5 1.4 5 3 V5 H9.2 V6 H3.2 C1.2 6 0 7.4 0 9.6 C0 11.8 1.2 13.2 3 13.2 H4.6 V10.6 C4.6 8.8 5.9 7.5 7.6 7.5 H11.4 C12.8 7.5 13.8 6.4 13.8 5 V3 C13.8 1.4 12.4 0 8.8 0 Z" fill="#f7c531" transform="rotate(180 9 9)"/><circle cx="7.2" cy="2.6" r="1" fill="#fff"/><circle cx="10.8" cy="15.4" r="1" fill="#fff"/></g></svg>
<svg style="left:1730.5px;top:209px;" width="16" height="16" viewBox="0 0 16 16"><path d="M1.5 1.5 L14.5 14.5 M14.5 1.5 L1.5 14.5" stroke="#a8a8a8" stroke-width="1.8" fill="none"/></svg>
<svg style="left:1782px;top:202px;" width="26" height="30" viewBox="0 0 26 30"><path d="M8 0 L0 8 L8 8 Z" fill="#9aa7b0" opacity="0.85"/><path d="M10 0 H20 V28 H0 V10 H10 Z" fill="#9aa7b0" opacity="0.85"/><g transform="translate(8,12)"><path d="M8.8 0 C5.6 0 5 1.4 5 3 V5 H9.2 V6 H3.2 C1.2 6 0 7.4 0 9.6 C0 11.8 1.2 13.2 3 13.2 H4.6 V10.6 C4.6 8.8 5.9 7.5 7.6 7.5 H11.4 C12.8 7.5 13.8 6.4 13.8 5 V3 C13.8 1.4 12.4 0 8.8 0 Z" fill="#fff" stroke="#fff" stroke-width="3" transform="translate(0.2,0.2)"/><path d="M8.8 0 C5.6 0 5 1.4 5 3 V5 H9.2 V6 H3.2 C1.2 6 0 7.4 0 9.6 C0 11.8 1.2 13.2 3 13.2 H4.6 V10.6 C4.6 8.8 5.9 7.5 7.6 7.5 H11.4 C12.8 7.5 13.8 6.4 13.8 5 V3 C13.8 1.4 12.4 0 8.8 0 Z" fill="#fff" stroke="#fff" stroke-width="3" transform="rotate(180 9 9) translate(-0.2,-0.2)"/><path d="M8.8 0 C5.6 0 5 1.4 5 3 V5 H9.2 V6 H3.2 C1.2 6 0 7.4 0 9.6 C0 11.8 1.2 13.2 3 13.2 H4.6 V10.6 C4.6 8.8 5.9 7.5 7.6 7.5 H11.4 C12.8 7.5 13.8 6.4 13.8 5 V3 C13.8 1.4 12.4 0 8.8 0 Z" fill="#40a0d9"/><path d="M8.8 0 C5.6 0 5 1.4 5 3 V5 H9.2 V6 H3.2 C1.2 6 0 7.4 0 9.6 C0 11.8 1.2 13.2 3 13.2 H4.6 V10.6 C4.6 8.8 5.9 7.5 7.6 7.5 H11.4 C12.8 7.5 13.8 6.4 13.8 5 V3 C13.8 1.4 12.4 0 8.8 0 Z" fill="#f7c531" transform="rotate(180 9 9)"/><circle cx="7.2" cy="2.6" r="1" fill="#fff"/><circle cx="10.8" cy="15.4" r="1" fill="#fff"/></g></svg>
<svg style="left:1942px;top:209px;" width="16" height="16" viewBox="0 0 16 16"><path d="M1.5 1.5 L14.5 14.5 M14.5 1.5 L1.5 14.5" stroke="#a8a8a8" stroke-width="1.8" fill="none"/></svg>
<div style="left:2022px;top:204.5px;width:5px;height:5px;background:#6e6e6e;border-radius:50%;"></div>
<div style="left:2022px;top:213.5px;width:5px;height:5px;background:#6e6e6e;border-radius:50%;"></div>
<div style="left:2022px;top:222.5px;width:5px;height:5px;background:#6e6e6e;border-radius:50%;"></div>
<div style="left:634px;top:244px;width:1414px;height:840px;background:#fff;"></div>
<div style="left:634px;top:244px;width:132px;height:840px;background:#f0f0f0;"></div>
<div style="left:766px;top:244px;width:2px;height:840px;background:#d9d9d9;"></div>
<div style="left:835px;top:386px;width:1.5px;height:660px;background:#dcdcdc;"></div>
<div style="left:897px;top:430px;width:1.5px;height:352px;background:#dcdcdc;"></div>
<div style="left:959px;top:474px;width:1.5px;height:132px;background:#dcdcdc;"></div>
<svg style="left:710px;top:266px;" width="18" height="22" viewBox="0 0 18 22"><path d="M0.5 0 L17 11 L0.5 22 Z" fill="#59a869"/></svg>
<svg style="left:710px;top:354px;" width="18" height="22" viewBox="0 0 18 22"><path d="M0.5 0 L17 11 L0.5 22 Z" fill="#59a869"/></svg>
<svg style="left:758px;top:269px;" width="18" height="24" viewBox="0 0 18 24"><path d="M1 1 H17 V14 L9 22.5 L1 14 Z" fill="#fff" stroke="#c9c9c9" stroke-width="1.6"/><path d="M5 8.5 H13" stroke="#c9c9c9" stroke-width="1.6"/></svg>
<svg style="left:758px;top:357px;" width="18" height="24" viewBox="0 0 18 24"><path d="M1 1 H17 V14 L9 22.5 L1 14 Z" fill="#fff" stroke="#c9c9c9" stroke-width="1.6"/><path d="M5 8.5 H13" stroke="#c9c9c9" stroke-width="1.6"/></svg>
<svg style="left:758px;top:445px;" width="18" height="24" viewBox="0 0 18 24"><path d="M1 1 H17 V14 L9 22.5 L1 14 Z" fill="#fff" stroke="#c9c9c9" stroke-width="1.6"/><path d="M5 8.5 H13" stroke="#c9c9c9" stroke-width="1.6"/></svg>
<svg style="left:758px;top:616px;" width="18" height="24" viewBox="0 0 18 24"><path d="M1 23 H17 V10 L9 1.5 L1 10 Z" fill="#fff" stroke="#c9c9c9" stroke-width="1.6"/><path d="M5 15.5 H13" stroke="#c9c9c9" stroke-width="1.6"/></svg>
<svg style="left:758px;top:1012px;" width="18" height="24" viewBox="0 0 18 24"><path d="M1 23 H17 V10 L9 1.5 L1 10 Z" fill="#fff" stroke="#c9c9c9" stroke-width="1.6"/><path d="M5 15.5 H13" stroke="#c9c9c9" stroke-width="1.6"/></svg>
<svg style="left:2010.7px;top:260.2px;" width="23" height="18" viewBox="0 0 23 18"><path d="M1.6 7 L8.55 13.95 L20.8 1.7" stroke="#59a869" stroke-width="5" fill="none"/></svg>
<div style="left:2028px;top:332px;width:14px;height:82px;background:#c9c9cb;border-radius:7px;"></div>
<div style="left:634px;top:1084px;width:1414px;height:44px;background:#f2f2f2;"></div>
<div style="left:634px;top:1084px;width:1414px;height:1px;background:#e6e6e6;"></div>
<svg style="left:977px;top:1102px;" width="8" height="13" viewBox="0 0 8 13"><path d="M1.5 1.5 L6 6.5 L1.5 11.5" stroke="#9a9a9a" stroke-width="1.6" fill="none"/></svg>
<div style="left:154px;top:1128px;width:1894px;height:2px;background:#d1d1d1;"></div>
<svg style="left:258px;top:1142px;" width="30" height="30" viewBox="0 0 30 30"><path d="M5 4 a4 4 0 0 1 4 -4 h6 a4 4 0 0 1 4 4 v7 h-9 a5 5 0 0 0 -5 5 v2 h-1 a4 4 0 0 1 -4 -4 v-5 a4 4 0 0 1 4 -4 Z" fill="#a7cdea" transform="translate(1,0)"/><path d="M20 7 h4 a4 4 0 0 1 4 4 v5 a4 4 0 0 1 -4 4 h-9 v2 h5 v3 a4 4 0 0 1 -4 4 h-5 a4 4 0 0 1 -4 -4 v-8 a5 5 0 0 1 5 -5 h8 Z" fill="#fbe29a" transform="translate(0,1)"/><path d="M18 14 L18 30 L10 22 Z" fill="#f0a35c" opacity="0.9"/><path d="M20 14 L28 22 L20 30 Z" fill="#8dc596"/><circle cx="10" cy="4.5" r="1.3" fill="#fff"/></svg>
<svg style="left:1020.5px;top:1150.5px;" width="16" height="16" viewBox="0 0 16 16"><path d="M1.5 1.5 L14.5 14.5 M14.5 1.5 L1.5 14.5" stroke="#a8a8a8" stroke-width="1.8" fill="none"/></svg>
<div style="left:154px;top:1182px;width:1894px;height:2px;background:#d1d1d1;"></div>
<div style="left:232px;top:1178px;width:826px;height:6px;background:#a3b1c8;"></div>
<svg style="left:1956.3px;top:1141.9px;" width="27.6" height="27.6" viewBox="0 0 27.6 27.6"><path d="M10.55 4.77 L11.27 1.25 L16.33 1.25 L17.05 4.77 A9.60 9.60 0 0 1 20.00 6.47 L23.40 5.34 L25.93 9.72 L23.25 12.10 A9.60 9.60 0 0 1 23.25 15.50 L25.93 17.88 L23.40 22.26 L20.00 21.13 A9.60 9.60 0 0 1 17.05 22.83 L16.33 26.35 L11.27 26.35 L10.55 22.83 A9.60 9.60 0 0 1 7.60 21.13 L4.20 22.26 L1.67 17.88 L4.35 15.50 A9.60 9.60 0 0 1 4.35 12.10 L1.67 9.72 L4.20 5.34 L7.60 6.47 A9.60 9.60 0 0 1 10.55 4.77 Z M9.19 13.8 a4.61 4.61 0 1 0 9.22 0 a4.61 4.61 0 1 0 -9.22 0 Z" fill="#757575" fill-rule="evenodd"/></svg>
<div style="left:2010px;top:1153.6px;width:24px;height:4px;background:#757575;"></div>
<div style="left:211px;top:1184px;width:2px;height:388px;background:#d1d1d1;"></div>
<svg style="left:173px;top:1200px;" width="21" height="25" viewBox="0 0 21 25"><path d="M1 0 L20.5 12.5 L1 25 Z" fill="#59a869"/></svg>
<svg style="left:167px;top:1249px;" width="33" height="30" viewBox="0 0 33 30"><path d="M0.9 9.2 L15.4 19 L0.9 28.7 Z" fill="#59a869"/><circle cx="19.3" cy="12.9" r="12" fill="#e25555"/><rect x="17.6" y="4.9" width="3.6" height="7.8" fill="#fff"/><rect x="17.6" y="15" width="3.6" height="3.5" fill="#fff"/></svg>
<svg style="left:169px;top:1300px;" width="26" height="32" viewBox="0 0 26 32"><g fill="none" stroke="#7a7a7a" stroke-width="2.6"><path d="M4 13 A9.5 9.5 0 0 1 21 8"/><path d="M22 19 A9.5 9.5 0 0 1 5 24"/></g><path d="M22 2 V10 H14 Z M4 30 V22 H12 Z" fill="#7a7a7a"/><rect x="1" y="14" width="6.5" height="6.5" fill="none" stroke="#7a7a7a" stroke-width="2"/><rect x="18.5" y="11.5" width="6.5" height="6.5" fill="none" stroke="#7a7a7a" stroke-width="2"/></svg>
<svg style="left:168px;top:1354px;" width="28" height="28" viewBox="0 0 28 28"><path d="M4.5 27.5 L0.5 23.5 L12 12 A8.2 8.2 0 0 1 22.5 1 L17.5 6 L18.2 9.8 L22 10.5 L27 5.5 A8.2 8.2 0 0 1 16 16 Z" fill="#6e6e6e"/></svg>
<div style="left:162px;top:1400.5px;width:40px;height:2px;background:#d4d4d4;"></div>
<div style="left:172px;top:1424.5px;width:20px;height:20px;background:#c2c2c2;"></div>
<div style="left:162px;top:1466.5px;width:40px;height:2px;background:#d4d4d4;"></div>
<svg style="left:170px;top:1490px;" width="25" height="20" viewBox="0 0 25 20"><rect x="0" y="0" width="13.5" height="8.5" fill="#6e6e6e"/><rect x="16" y="0" width="9" height="8.5" fill="#6e6e6e"/><rect x="0" y="11" width="25" height="9" fill="#6e6e6e"/></svg>
<div style="left:162px;top:1532px;width:40px;height:2px;background:#d4d4d4;"></div>
<svg style="left:175px;top:1548px;" width="16" height="11" viewBox="0 0 16 11"><path d="M1 1 L6 5.5 L1 10 M9 1 L14 5.5 L9 10" stroke="#6e6e6e" stroke-width="1.6" fill="none"/></svg>
<div style="left:213px;top:1240px;width:1777px;height:2px;background:#d1d1d1;"></div>
<div style="left:220px;top:1190px;width:44px;height:44px;background:#d0d0d0;border-radius:6px;"></div>
<svg style="left:227px;top:1201px;" width="31" height="25" viewBox="0 0 31 25"><path d="M3.4 12 L11.6 20.2 L27.4 4.4" stroke="#6e6e6e" stroke-width="4.5" fill="none"/></svg>
<svg style="left:280px;top:1198px;" width="28" height="28" viewBox="0 0 28 28"><circle cx="14.1" cy="14.1" r="11.1" fill="none" stroke="#6e6e6e" stroke-width="3.8"/><path d="M6.3 21.9 L21.9 6.3" stroke="#6e6e6e" stroke-width="3.8"/></svg>
<div style="left:326px;top:1192px;width:2px;height:40px;background:#d4d4d4;"></div>
<svg style="left:346.4px;top:1200.3px;" width="30" height="25" viewBox="0 0 30 25"><rect x="5.6" y="0" width="4.3" height="17" fill="#6e6e6e"/><path d="M0 15.4 H15.5 L7.75 24 Z" fill="#6e6e6e"/><text x="16" y="9.6" font-family="Liberation Sans" font-size="17" font-weight="700" fill="#6e6e6e">a</text><text x="16.4" y="24" font-family="Liberation Sans" font-size="17" font-weight="700" fill="#6e6e6e">z</text></svg>
<svg style="left:398.2px;top:1200.3px;" width="30" height="25" viewBox="0 0 30 25"><rect x="5.6" y="0" width="4.3" height="17" fill="#6e6e6e"/><path d="M0 15.4 H15.5 L7.75 24 Z" fill="#6e6e6e"/><rect x="13.8" y="0" width="14.2" height="3.5" fill="#6e6e6e"/><rect x="18" y="8" width="10" height="3.5" fill="#6e6e6e"/><rect x="22" y="16" width="6" height="3.5" fill="#6e6e6e"/></svg>
<div style="left:444px;top:1192px;width:2px;height:40px;background:#d4d4d4;"></div>
<svg style="left:466px;top:1198px;" width="24" height="28" viewBox="0 0 24 28"><rect x="0" y="0" width="24" height="4.1" fill="#6e6e6e"/><rect x="0" y="23.9" width="24" height="4.1" fill="#6e6e6e"/><path d="M12 5.6 L18.2 11.8 H5.8 Z M12 22.4 L18.2 16.2 H5.8 Z" fill="#6e6e6e"/></svg>
<svg style="left:517.5px;top:1200px;" width="24" height="24" viewBox="0 0 24 24"><rect x="0" y="9.9" width="24" height="4.2" fill="#6e6e6e"/><path d="M12 6.4 L18.4 0 H5.6 Z M12 17.6 L18.4 24 H5.6 Z" fill="#6e6e6e"/></svg>
<div style="left:562px;top:1192px;width:2px;height:40px;background:#d4d4d4;"></div>
<svg style="left:586px;top:1199.8px;" width="20" height="25" viewBox="0 0 20 25"><path d="M10 24.5 V3.5 M1.6 11.6 L10 3.2 L18.4 11.6" stroke="#c6c6c6" stroke-width="4.1" fill="none"/></svg>
<svg style="left:638px;top:1199.8px;" width="20" height="25" viewBox="0 0 20 25"><path d="M10 0 V21 M1.6 12.9 L10 21.3 L18.4 12.9" stroke="#6e6e6e" stroke-width="4.1" fill="none"/></svg>
<svg style="left:686px;top:1198px;" width="34" height="33" viewBox="0 0 34 33"><circle cx="14" cy="14" r="12.1" fill="none" stroke="#6e6e6e" stroke-width="3.6"/><path d="M13.6 6.8 V14.6 L19.4 18.6" stroke="#6e6e6e" stroke-width="3.4" fill="none"/><path d="M21 26.3 H32.4 L26.7 32 Z" fill="#303030"/></svg>
<svg style="left:740px;top:1199.8px;" width="25" height="25" viewBox="0 0 25 25"><path d="M2.1 4 V22.4 H20.2" stroke="#6e6e6e" stroke-width="4.2" fill="none"/><path d="M23.6 0.8 L11.5 12.9" stroke="#6e6e6e" stroke-width="4.2"/><path d="M7.4 4.6 V16.6 H19.4 Z" fill="#6e6e6e"/></svg>
<svg style="left:791.9px;top:1199.8px;" width="26" height="25" viewBox="0 0 26 25"><path d="M2.1 4 V22.4 H20.2" stroke="#6e6e6e" stroke-width="4.2" fill="none"/><path d="M9.2 15 L21 3.2" stroke="#6e6e6e" stroke-width="4.2"/><path d="M11.6 0 H24.2 V12.6 Z" fill="#6e6e6e"/></svg>
<div style="left:836px;top:1192px;width:2px;height:40px;background:#d4d4d4;"></div>
<svg style="left:856.1px;top:1198.2px;" width="27.6" height="27.6" viewBox="0 0 27.6 27.6"><path d="M10.55 4.77 L11.27 1.25 L16.33 1.25 L17.05 4.77 A9.60 9.60 0 0 1 20.00 6.47 L23.40 5.34 L25.93 9.72 L23.25 12.10 A9.60 9.60 0 0 1 23.25 15.50 L25.93 17.88 L23.40 22.26 L20.00 21.13 A9.60 9.60 0 0 1 17.05 22.83 L16.33 26.35 L11.27 26.35 L10.55 22.83 A9.60 9.60 0 0 1 7.60 21.13 L4.20 22.26 L1.67 17.88 L4.35 15.50 A9.60 9.60 0 0 1 4.35 12.10 L1.67 9.72 L4.20 5.34 L7.60 6.47 A9.60 9.60 0 0 1 10.55 4.77 Z M9.19 13.8 a4.61 4.61 0 1 0 9.22 0 a4.61 4.61 0 1 0 -9.22 0 Z" fill="#757575" fill-rule="evenodd"/></svg>
<svg style="left:876.4px;top:1224.3px;" width="12" height="6" viewBox="0 0 12 6"><path d="M0 0 H11.6 L5.8 5.8 Z" fill="#303030"/></svg>
<svg style="left:947.0px;top:1196.8px;" width="26.4" height="26.4" viewBox="0 0 26.4 26.4"><circle cx="13.2" cy="13.2" r="13.2" fill="#f0a30a"/><path d="M8.2 8.2 L18.2 18.2 M18.2 8.2 L8.2 18.2" stroke="#fff" stroke-width="2.6" fill="none" stroke-linecap="round"/></svg>
<div style="left:213px;top:1242px;width:725px;height:330px;background:#fff;"></div>
<div style="left:938px;top:1242px;width:2px;height:330px;background:#d1d1d1;"></div>
<div style="left:213px;top:1242px;width:725px;height:40px;background:#d5d5d5;"></div>
<svg style="left:224.2px;top:1255px;" width="18" height="11" viewBox="0 0 18 11"><path d="M1.4 1.6 L8.7 8.4 L16 1.6" stroke="#7d7d7d" stroke-width="2.9" fill="none"/></svg>
<svg style="left:260.8px;top:1248.8px;" width="26.4" height="26.4" viewBox="0 0 26.4 26.4"><circle cx="13.2" cy="13.2" r="13.2" fill="#f4b566"/><path d="M8.2 8.2 L18.2 18.2 M18.2 8.2 L8.2 18.2" stroke="#fff" stroke-width="2.6" fill="none" stroke-linecap="round"/></svg>
<svg style="left:260.4px;top:1295px;" width="18" height="11" viewBox="0 0 18 11"><path d="M1.4 1.6 L8.7 8.4 L16 1.6" stroke="#7d7d7d" stroke-width="2.9" fill="none"/></svg>
<svg style="left:296.90000000000003px;top:1288.8px;" width="26.4" height="26.4" viewBox="0 0 26.4 26.4"><circle cx="13.2" cy="13.2" r="13.2" fill="#f4b566"/><path d="M8.2 8.2 L18.2 18.2 M18.2 8.2 L8.2 18.2" stroke="#fff" stroke-width="2.6" fill="none" stroke-linecap="round"/></svg>
<svg style="left:296.5px;top:1335px;" width="18" height="11" viewBox="0 0 18 11"><path d="M1.4 1.6 L8.7 8.4 L16 1.6" stroke="#7d7d7d" stroke-width="2.9" fill="none"/></svg>
<svg style="left:332.8px;top:1328.8px;" width="26.4" height="26.4" viewBox="0 0 26.4 26.4"><circle cx="13.2" cy="13.2" r="13.2" fill="#f4b566"/><path d="M8.2 8.2 L18.2 18.2 M18.2 8.2 L8.2 18.2" stroke="#fff" stroke-width="2.6" fill="none" stroke-linecap="round"/></svg>
<svg style="left:368.8px;top:1368.8px;" width="26.4" height="26.4" viewBox="0 0 26.4 26.4"><circle cx="13.2" cy="13.2" r="13.2" fill="#f4b566"/><path d="M8.2 8.2 L18.2 18.2 M18.2 8.2 L8.2 18.2" stroke="#fff" stroke-width="2.6" fill="none" stroke-linecap="round"/></svg>
<div style="left:940px;top:1242px;width:1050px;height:330px;background:#fff;"></div>
<div style="left:1990px;top:1242px;width:2px;height:330px;background:#d1d1d1;"></div>
<div style="left:940px;top:1500px;width:1050px;height:72px;overflow:hidden;"><span class="tt" style="position:absolute;white-space:pre;left:25.600000000000023px;top:55.55px;font:400 28px/28px 'Liberation Mono',monospace;letter-spacing:-1.20px;color:#8b1414">Traceback (most recent call last):</span></div>
<svg style="left:2010px;top:1258px;" width="20" height="24" viewBox="0 0 20 24"><path d="M10 23.5 V3.5 M1.6 11.6 L10 3.2 L18.4 11.6" stroke="#6e6e6e" stroke-width="4.1" fill="none"/></svg>
<svg style="left:2010px;top:1310px;" width="20" height="24" viewBox="0 0 20 24"><path d="M10 0 V20.5 M1.6 12.4 L10 20.8 L18.4 12.4" stroke="#6e6e6e" stroke-width="4.1" fill="none"/></svg>
<svg style="left:2008px;top:1361.7px;" width="27" height="28" viewBox="0 0 27 28"><path d="M0 2 H24" stroke="#6e6e6e" stroke-width="4"/><path d="M0 11.4 H19.4 a4.8 4.8 0 0 1 0 9.6 H15.5" stroke="#6e6e6e" stroke-width="3.6" fill="none"/><path d="M9.6 21 L16.4 15.2 V26.8 Z" fill="#6e6e6e"/><path d="M0 21 H6" stroke="#6e6e6e" stroke-width="4"/></svg>
<svg style="left:2008px;top:1412px;" width="27" height="25" viewBox="0 0 27 25"><path d="M0 5.6 H7.5 M0 13.6 H7.5" stroke="#6e6e6e" stroke-width="3.7"/><path d="M18.6 0 V15 M12.2 9.8 L18.6 16.2 L25 9.8" stroke="#6e6e6e" stroke-width="3.7" fill="none"/><path d="M0 22.6 H24" stroke="#6e6e6e" stroke-width="3.8"/></svg>
<svg style="left:2006.3px;top:1466px;" width="28" height="27" viewBox="0 0 28 27"><rect x="5.7" y="0" width="16.4" height="5.4" fill="#6e6e6e"/><rect x="0" y="7.4" width="27.7" height="11.4" rx="2.2" fill="#6e6e6e"/><rect x="7.2" y="16.2" width="13.4" height="9" fill="#f2f2f2" stroke="#6e6e6e" stroke-width="3"/><rect x="23" y="9.8" width="2.4" height="2.4" fill="#f2f2f2"/></svg>
<svg style="left:2010px;top:1516.2px;" width="20" height="26" viewBox="0 0 20 26"><rect x="6" y="0" width="8" height="4" fill="#6e6e6e"/><rect x="0" y="2.4" width="20" height="3.8" fill="#6e6e6e"/><path d="M2.4 7.8 H17.8 V22.8 a3 3 0 0 1 -3 3 H5.4 a3 3 0 0 1 -3 -3 Z" fill="#6e6e6e"/></svg>
<div style="left:112px;top:1572px;width:1936px;height:2px;background:#d1d1d1;"></div>
<div style="left:252px;top:1574px;width:110px;height:40px;background:#bdbdbd;"></div>
<div style="left:112px;top:1614px;width:1936px;height:2px;background:#d1d1d1;"></div>
<svg style="left:174.5px;top:1583px;" width="19" height="23" viewBox="0 0 19 23"><g fill="#6e6e6e"><circle cx="4" cy="4" r="3.8"/><circle cx="4" cy="19" r="3.8"/><circle cx="15" cy="5" r="3.6"/></g><path d="M4 4 V19 M15 5 C15 12.0 4 9.7 4 16.6" stroke="#6e6e6e" stroke-width="3.2" fill="none"/></svg>
<svg style="left:275.5px;top:1585px;" width="17" height="20" viewBox="0 0 17 20"><path d="M0.5 0 L16.5 10 L0.5 20 Z" fill="#6e6e6e"/></svg>
<svg style="left:385.5px;top:1586px;" width="21" height="17" viewBox="0 0 21 17"><g fill="#6e6e6e"><rect x="0" y="0.5" width="4" height="3.4"/><rect x="6.5" y="0.5" width="14.5" height="3.4"/><rect x="0" y="6.8" width="4" height="3.4"/><rect x="6.5" y="6.8" width="14.5" height="3.4"/><rect x="0" y="13.1" width="4" height="3.4"/><rect x="6.5" y="13.1" width="14.5" height="3.4"/></g></svg>
<svg style="left:521px;top:1584px;" width="21" height="21" viewBox="0 0 21 21"><circle cx="10.5" cy="10.5" r="10.3" fill="#6e6e6e"/><rect x="8.7" y="4.2" width="3.6" height="8" fill="#f2f2f2"/><rect x="8.7" y="14" width="3.6" height="3.4" fill="#f2f2f2"/></svg>
<svg style="left:695px;top:1583px;" width="24" height="24" viewBox="0 0 24 24"><path d="M12 1 L23 7 L12 13 L1 7 Z" fill="#6e6e6e"/><path d="M2 12 L12 17.5 L22 12 M2 17 L12 22.5 L22 17" stroke="#6e6e6e" stroke-width="2.4" fill="none"/></svg>
<svg style="left:953.5px;top:1584px;" width="22" height="22" viewBox="0 0 22 22"><g fill="#6e6e6e"><path d="M5.5 3.5 a3.5 3.5 0 0 1 3.5 -3.5 h4 a3.5 3.5 0 0 1 3.5 3.5 v4.5 a2.5 2.5 0 0 1 -2.5 2.5 h-6 a3 3 0 0 0 -3 3 v2.5 h-1.5 a3.5 3.5 0 0 1 -3.5 -3.5 v-3 a3.5 3.5 0 0 1 3.5 -3.5 h7.5 v-1 h-5.5 Z"/><path d="M16.5 18.5 a3.5 3.5 0 0 1 -3.5 3.5 h-4 a3.5 3.5 0 0 1 -3.5 -3.5 v-4.5 a2.5 2.5 0 0 1 2.5 -2.5 h6 a3 3 0 0 0 3 -3 v-2.5 h1.5 a3.5 3.5 0 0 1 3.5 3.5 v3 a3.5 3.5 0 0 1 -3.5 3.5 h-7.5 v1 h5.5 Z"/></g><circle cx="8.3" cy="3.2" r="1.1" fill="#f2f2f2"/><circle cx="13.7" cy="18.8" r="1.1" fill="#f2f2f2"/></svg>
<svg style="left:1192px;top:1584px;" width="22" height="21" viewBox="0 0 22 21"><rect x="0" y="0" width="22" height="21" rx="1.5" fill="#6e6e6e"/><path d="M3.5 4.5 L9 9.5 L3.5 14.5" stroke="#f2f2f2" stroke-width="2" fill="none"/><path d="M10.5 15.5 H18" stroke="#f2f2f2" stroke-width="2"/></svg>
<svg style="left:1852px;top:1582px;" width="26" height="26" viewBox="0 0 26 26"><path d="M13 0 A13 13 0 1 0 13 26 H26 V13 A13 13 0 0 0 13 0 Z" fill="#59a869"/></svg>
<svg style="left:124px;top:1624px;" width="25" height="24" viewBox="0 0 25 24"><rect x="5.5" y="1" width="18" height="17" fill="none" stroke="#6e6e6e" stroke-width="1.8"/><path d="M1 6 V23 H19" fill="none" stroke="#6e6e6e" stroke-width="1.8"/></svg>
<svg style="left:1878px;top:1622.3px;" width="19" height="27.6" viewBox="0 0 19 27.6"><g fill="#6e6e6e"><circle cx="4" cy="4" r="3.8"/><circle cx="4" cy="23.6" r="3.8"/><circle cx="15" cy="5" r="3.6"/></g><path d="M4 4 V23.6 M15 5 C15 14.4 4 11.6 4 19.9" stroke="#6e6e6e" stroke-width="3.2" fill="none"/></svg>
<svg style="left:1997px;top:1622px;" width="24" height="24" viewBox="0 0 24 24"><rect x="9" y="11" width="14" height="12" fill="#6e6e6e"/><path d="M2 12 V7.5 a5 5 0 0 1 10 0 V12" stroke="#6e6e6e" stroke-width="2.4" fill="none"/></svg>
<svg style="left:1352px;top:148px;" width="20" height="24" viewBox="0 0 20 24"><path d="M0 0 L20 12 L0 24 Z" fill="#59a869"/></svg>
<svg style="left:1400px;top:146px;" width="24" height="28" viewBox="0 0 24 28"><g fill="#59a869"><path d="M4 13 a8 8.5 0 0 1 16 0 V19.5 a8 8 0 0 1 -16 0 Z"/><rect x="0" y="9.5" width="24" height="3"/><rect x="0" y="15.5" width="24" height="3"/><rect x="0" y="21.3" width="24" height="3"/></g><path d="M5 0.5 L9.5 6 M19 0.5 L14.5 6" stroke="#59a869" stroke-width="3.2" fill="none"/><rect x="8" y="13.3" width="8" height="2.2" fill="#f2f2f2"/><rect x="8" y="18.6" width="8" height="2.2" fill="#f2f2f2"/></svg>
<svg style="left:1449px;top:148px;" width="32" height="28" viewBox="0 0 32 28"><path d="M0 3 L11 0 L22 3 V10 H10 V23.5 C3 20 0 15 0 9 Z" fill="#c4c4c4"/><path d="M14 12 L30 20 L14 28 Z" fill="#c4c4c4"/></svg>
<div style="left:1506px;top:150px;width:20px;height:20px;background:#c0c0c0;"></div>
<div style="left:1548px;top:140px;width:2px;height:40px;background:#d0d0d0;"></div>
<svg style="left:1629.9px;top:148.4px;" width="22" height="22" viewBox="0 0 22 22"><path d="M0 7.8 V21.4 H13.6 Z" fill="#3d8fd6"/><path d="M21 1 L6 16" stroke="#3d8fd6" stroke-width="4.4"/></svg>
<svg style="left:1680.2px;top:148.4px;" width="27" height="22" viewBox="0 0 27 22"><path d="M1.8 11.4 L8.6 18.2 L24.9 1.9" stroke="#59a869" stroke-width="5" fill="none"/></svg>
<svg style="left:1732.1px;top:149.9px;" width="22" height="22" viewBox="0 0 22 22"><path d="M8.2 0 H22 V13.6 Z" fill="#59a869"/><path d="M1.5 20.1 L16.5 5.1" stroke="#59a869" stroke-width="4.4"/></svg>
<svg style="left:1781.8px;top:145.7px;" width="28" height="28" viewBox="0 0 28 28"><circle cx="13.9" cy="13.9" r="12.1" fill="none" stroke="#c8c8c8" stroke-width="3.4"/><path d="M13.9 7 V14.3 L19.8 18" stroke="#c8c8c8" stroke-width="3.2" fill="none"/></svg>
<svg style="left:1836.3px;top:146.3px;" width="26" height="26" viewBox="0 0 26 26"><path d="M0 8.4 L8.2 0.6 V16.2 Z" fill="#646464"/><path d="M7 8.4 H16.2 a7.1 7.1 0 0 1 0 14.2 H8" stroke="#646464" stroke-width="4.4" fill="none"/></svg>
<div style="left:1880px;top:140px;width:2px;height:40px;background:#d0d0d0;"></div>
<svg style="left:1900px;top:146px;" width="29" height="29" viewBox="0 0 29 29"><circle cx="10.1" cy="10.1" r="7.9" fill="none" stroke="#646464" stroke-width="4.2"/><path d="M15.6 15.6 L26.4 26.4" stroke="#646464" stroke-width="4.6"/></svg>
<svg style="left:1951.8000000000002px;top:145.8px;" width="28.2" height="28.2" viewBox="0 0 28.2 28.2"><path d="M10.77 4.86 L11.51 1.26 L16.69 1.26 L17.43 4.86 A9.82 9.82 0 0 1 20.44 6.60 L23.93 5.44 L26.52 9.92 L23.77 12.36 A9.82 9.82 0 0 1 23.77 15.84 L26.52 18.28 L23.93 22.76 L20.44 21.60 A9.82 9.82 0 0 1 17.43 23.34 L16.69 26.94 L11.51 26.94 L10.77 23.34 A9.82 9.82 0 0 1 7.76 21.60 L4.27 22.76 L1.68 18.28 L4.43 15.84 A9.82 9.82 0 0 1 4.43 12.36 L1.68 9.92 L4.27 5.44 L7.76 6.60 A9.82 9.82 0 0 1 10.77 4.86 Z M9.38 14.1 a4.72 4.72 0 1 0 9.43 0 a4.72 4.72 0 1 0 -9.43 0 Z" fill="#646464" fill-rule="evenodd"/></svg>
<svg style="left:2003.5px;top:145.5px" width="30" height="29" viewBox="0 0 30 29"><defs><linearGradient id="lg1" x1="0" y1="0" x2="1" y2="0.3"><stop offset="0" stop-color="#8fdc6a"/><stop offset="0.6" stop-color="#b9ea74"/><stop offset="1" stop-color="#5cc0a0"/></linearGradient></defs><path d="M3.5 3 C5 1 8 0.2 11 0.6 C18 3 25 8 28.8 13 C29.4 14 29.4 15 28.8 15.8 C24 21 16 26 9 28.4 C6.5 28.8 4.5 27.5 3.4 25.5 C0.6 18.5 0.6 10 3.5 3 Z" fill="url(#lg1)"/><path d="M7 0.5 C9 0.2 10 0.3 11 0.6 C18 3 25 8 28.8 13 C29.3 13.7 29.4 14.5 29.2 15 C22 14 14 10 7 0.5 Z" fill="#2d86d8"/><path d="M29.2 15 C28.5 16.5 24 21 16 25.5 C13.5 22 14 17 18 12.5 C22 14 26 15 29.2 15 Z" fill="#1f50c8"/><path d="M3.4 25.5 C4.5 27.5 6.5 28.8 9 28.4 C11.5 27.6 14 26.6 16 25.5 C13.8 22.5 14 18.5 16.5 14.5 C11 17 6 21 3.4 25.5 Z" fill="#45aee3"/></svg>
<svg style="left:430px;top:146px;" width="30" height="30" viewBox="0 0 30 30"><path d="M5 4 a4 4 0 0 1 4 -4 h6 a4 4 0 0 1 4 4 v7 h-9 a5 5 0 0 0 -5 5 v2 h-1 a4 4 0 0 1 -4 -4 v-5 a4 4 0 0 1 4 -4 Z" fill="#a7cdea" transform="translate(1,0)"/><path d="M20 7 h4 a4 4 0 0 1 4 4 v5 a4 4 0 0 1 -4 4 h-9 v2 h5 v3 a4 4 0 0 1 -4 4 h-5 a4 4 0 0 1 -4 -4 v-8 a5 5 0 0 1 5 -5 h8 Z" fill="#fbe29a" transform="translate(0,1)"/><path d="M18 14 L18 30 L10 22 Z" fill="#f0a35c" opacity="0.9"/><path d="M20 14 L28 22 L20 30 Z" fill="#8dc596"/><circle cx="10" cy="4.5" r="1.3" fill="#fff"/></svg>
<svg style="left:240px;top:146px;" width="26" height="30" viewBox="0 0 26 30"><path d="M8 0 L0 8 L8 8 Z" fill="#9aa7b0" opacity="0.85"/><path d="M10 0 H20 V28 H0 V10 H10 Z" fill="#9aa7b0" opacity="0.85"/><g transform="translate(8,12)"><path d="M8.8 0 C5.6 0 5 1.4 5 3 V5 H9.2 V6 H3.2 C1.2 6 0 7.4 0 9.6 C0 11.8 1.2 13.2 3 13.2 H4.6 V10.6 C4.6 8.8 5.9 7.5 7.6 7.5 H11.4 C12.8 7.5 13.8 6.4 13.8 5 V3 C13.8 1.4 12.4 0 8.8 0 Z" fill="#fff" stroke="#fff" stroke-width="3" transform="translate(0.2,0.2)"/><path d="M8.8 0 C5.6 0 5 1.4 5 3 V5 H9.2 V6 H3.2 C1.2 6 0 7.4 0 9.6 C0 11.8 1.2 13.2 3 13.2 H4.6 V10.6 C4.6 8.8 5.9 7.5 7.6 7.5 H11.4 C12.8 7.5 13.8 6.4 13.8 5 V3 C13.8 1.4 12.4 0 8.8 0 Z" fill="#fff" stroke="#fff" stroke-width="3" transform="rotate(180 9 9) translate(-0.2,-0.2)"/><path d="M8.8 0 C5.6 0 5 1.4 5 3 V5 H9.2 V6 H3.2 C1.2 6 0 7.4 0 9.6 C0 11.8 1.2 13.2 3 13.2 H4.6 V10.6 C4.6 8.8 5.9 7.5 7.6 7.5 H11.4 C12.8 7.5 13.8 6.4 13.8 5 V3 C13.8 1.4 12.4 0 8.8 0 Z" fill="#40a0d9"/><path d="M8.8 0 C5.6 0 5 1.4 5 3 V5 H9.2 V6 H3.2 C1.2 6 0 7.4 0 9.6 C0 11.8 1.2 13.2 3 13.2 H4.6 V10.6 C4.6 8.8 5.9 7.5 7.6 7.5 H11.4 C12.8 7.5 13.8 6.4 13.8 5 V3 C13.8 1.4 12.4 0 8.8 0 Z" fill="#f7c531" transform="rotate(180 9 9)"/><circle cx="7.2" cy="2.6" r="1" fill="#fff"/><circle cx="10.8" cy="15.4" r="1" fill="#fff"/></g></svg>
<span class="t" style="left:909.00px;top:91.00px;font:700 25.5px/25.5px 'Liberation Sans', sans-serif;color:#4d4d4d;letter-spacing:0.779px;">snake – GameStateTest.py</span>
<span class="t" style="left:136.40px;top:149.02px;font:700 23.5px/23.5px 'Liberation Sans', sans-serif;color:#000;letter-spacing:0.859px;">snake</span>
<span class="t" style="left:273.00px;top:150.01px;font:400 22.4px/22.4px 'Liberation Sans', sans-serif;color:#0a7700;width:25px;overflow:hidden;">Ga</span>
<span class="t" style="left:468.30px;top:150.01px;font:400 22.4px/22.4px 'Liberation Sans', sans-serif;color:#000;letter-spacing:-0.078px;">Python tests for GameStateTest.GameStateTest.</span>
<span class="t" style="left:948.30px;top:150.01px;font:400 22.4px/22.4px 'Liberation Sans', sans-serif;color:#000;letter-spacing:0.152px;">test_snake_should_move_down</span>
<span class="t" style="left:140.5px;top:275.4px;font:400 22.4px/22.4px 'Liberation Sans', sans-serif;color:#000;transform-origin:0 0;transform:rotate(-90deg) translate(-1.00px,-18.97px);letter-spacing:-0.078px;">Project</span>
<span class="t" style="left:140.5px;top:491.6px;font:400 22.4px/22.4px 'Liberation Sans', sans-serif;color:#000;transform-origin:0 0;transform:rotate(-90deg) translate(-1.00px,-18.97px);letter-spacing:-0.246px;">Pull Requests</span>
<span class="t" style="left:140.5px;top:1324.8px;font:400 22.4px/22.4px 'Liberation Sans', sans-serif;color:#000;transform-origin:0 0;transform:rotate(-90deg) translate(-1.00px,-18.97px);letter-spacing:0.451px;">Structure</span>
<span class="t" style="left:140.5px;top:1512.2px;font:400 22.4px/22.4px 'Liberation Sans', sans-serif;color:#000;transform-origin:0 0;transform:rotate(-90deg) translate(-1.00px,-18.97px);letter-spacing:0.026px;">Bookmarks</span>
<span class="t" style="left:217.30px;top:205.01px;font:400 25px/25px 'Liberation Sans', sans-serif;color:#000;letter-spacing:0.323px;">Project</span>
<span class="t" style="left:240.90px;top:253.00px;font:700 25.5px/25.5px 'Liberation Sans', sans-serif;color:#000;letter-spacing:0.994px;">snake</span>
<span class="t" style="left:330.30px;top:253.00px;font:400 25.5px/25.5px 'Liberation Sans', sans-serif;color:#999;letter-spacing:0.957px;width:302px;overflow:hidden;">~/PycharmProjects/snake</span>
<span class="t" style="left:277.00px;top:293.00px;font:400 25.5px/25.5px 'Liberation Sans', sans-serif;color:#000;letter-spacing:0.862px;">venv</span>
<span class="t" style="left:275.50px;top:333.00px;font:400 25.5px/25.5px 'Liberation Sans', sans-serif;color:#0a7700;letter-spacing:1.329px;">Direction.py</span>
<span class="t" style="left:276.50px;top:373.00px;font:400 25.5px/25.5px 'Liberation Sans', sans-serif;color:#000;letter-spacing:0.509px;">game1.py</span>
<span class="t" style="left:276.50px;top:413.00px;font:400 25.5px/25.5px 'Liberation Sans', sans-serif;color:#0a7700;letter-spacing:0.932px;">GameState.py</span>
<span class="t" style="left:276.50px;top:453.00px;font:400 25.5px/25.5px 'Liberation Sans', sans-serif;color:#0a7700;letter-spacing:0.766px;">GameStateTest.py</span>
<span class="t" style="left:276.50px;top:493.00px;font:400 25.5px/25.5px 'Liberation Sans', sans-serif;color:#9c2e12;letter-spacing:0.994px;">main.py</span>
<span class="t" style="left:275.50px;top:533.00px;font:400 25.5px/25.5px 'Liberation Sans', sans-serif;color:#000;letter-spacing:1.151px;">Position.py</span>
<span class="t" style="left:238.90px;top:573.00px;font:400 25.5px/25.5px 'Liberation Sans', sans-serif;color:#000;letter-spacing:1.078px;">External Libraries</span>
<span class="t" style="left:239.90px;top:613.00px;font:400 25.5px/25.5px 'Liberation Sans', sans-serif;color:#000;letter-spacing:1.136px;">Scratches and Consoles</span>
<span class="t" style="left:689.70px;top:206.02px;font:400 22.4px/22.4px 'Liberation Sans', sans-serif;color:#9c2e12;letter-spacing:0.049px;">main.py</span>
<span class="t" style="left:869.70px;top:206.02px;font:400 22.4px/22.4px 'Liberation Sans', sans-serif;color:#0a7700;letter-spacing:-0.121px;">GameState.py</span>
<span class="t" style="left:1114.00px;top:206.02px;font:400 22.4px/22.4px 'Liberation Sans', sans-serif;color:#0a7700;letter-spacing:0.225px;">Direction.py</span>
<span class="t" style="left:1336.00px;top:206.02px;font:400 22.4px/22.4px 'Liberation Sans', sans-serif;color:#0a7700;letter-spacing:-0.226px;">GameStateTest.py</span>
<span class="t" style="left:1620.80px;top:206.02px;font:400 22.4px/22.4px 'Liberation Sans', sans-serif;color:#000;letter-spacing:-0.705px;">game1.py</span>
<span class="t" style="left:1816.00px;top:206.02px;font:400 22.4px/22.4px 'Liberation Sans', sans-serif;color:#000;letter-spacing:0.037px;">Position.py</span>
<span class="t" style="left:672.20px;top:265.00px;font:400 28px/28px 'Liberation Mono', monospace;color:#adadad;letter-spacing:-1.20px;">8</span>
<span class="t" style="left:776.90px;top:265.00px;font:400 28px/28px 'Liberation Mono', monospace;color:#080808;letter-spacing:-1.20px;-webkit-text-stroke:0.35px;"><span style="color:#0033b3">class</span> GameStateTest(unittest.TestCase):</span>
<span class="t" style="left:672.20px;top:309.00px;font:400 28px/28px 'Liberation Mono', monospace;color:#adadad;letter-spacing:-1.20px;">9</span>
<span class="t" style="left:656.60px;top:353.00px;font:400 28px/28px 'Liberation Mono', monospace;color:#adadad;letter-spacing:-1.20px;">10</span>
<span class="t" style="left:776.90px;top:353.00px;font:400 28px/28px 'Liberation Mono', monospace;color:#080808;letter-spacing:-1.20px;-webkit-text-stroke:0.35px;">    <span style="color:#0033b3">def</span> <span style="color:#00627a">test_snake_should_move_right</span>(<span style="color:#94558d">self</span>):</span>
<span class="t" style="left:656.60px;top:397.00px;font:400 28px/28px 'Liberation Mono', monospace;color:#adadad;letter-spacing:-1.20px;">11</span>
<span class="t" style="left:776.90px;top:397.00px;font:400 28px/28px 'Liberation Mono', monospace;color:#080808;letter-spacing:-1.20px;-webkit-text-stroke:0.35px;">        state = GameState(</span>
<span class="t" style="left:656.60px;top:441.00px;font:400 28px/28px 'Liberation Mono', monospace;color:#adadad;letter-spacing:-1.20px;">12</span>
<span class="t" style="left:776.90px;top:441.00px;font:400 28px/28px 'Liberation Mono', monospace;color:#080808;letter-spacing:-1.20px;-webkit-text-stroke:0.35px;">            <span style="color:#660099">snake</span>=[</span>
<span class="t" style="left:656.60px;top:485.00px;font:400 28px/28px 'Liberation Mono', monospace;color:#adadad;letter-spacing:-1.20px;">13</span>
<span class="t" style="left:776.90px;top:485.00px;font:400 28px/28px 'Liberation Mono', monospace;color:#080808;letter-spacing:-1.20px;-webkit-text-stroke:0.35px;">                Position(<span style="color:#1750eb">1</span>, <span style="color:#1750eb">2</span>),</span>
<span class="t" style="left:656.60px;top:529.00px;font:400 28px/28px 'Liberation Mono', monospace;color:#adadad;letter-spacing:-1.20px;">14</span>
<span class="t" style="left:776.90px;top:529.00px;font:400 28px/28px 'Liberation Mono', monospace;color:#080808;letter-spacing:-1.20px;-webkit-text-stroke:0.35px;">                Position(<span style="color:#1750eb">1</span>, <span style="color:#1750eb">3</span>),</span>
<span class="t" style="left:656.60px;top:573.00px;font:400 28px/28px 'Liberation Mono', monospace;color:#adadad;letter-spacing:-1.20px;">15</span>
<span class="t" style="left:776.90px;top:573.00px;font:400 28px/28px 'Liberation Mono', monospace;color:#080808;letter-spacing:-1.20px;-webkit-text-stroke:0.35px;">                Position(<span style="color:#1750eb">1</span>, <span style="color:#1750eb">4</span>)</span>
<span class="t" style="left:656.60px;top:617.00px;font:400 28px/28px 'Liberation Mono', monospace;color:#adadad;letter-spacing:-1.20px;">16</span>
<span class="t" style="left:776.90px;top:617.00px;font:400 28px/28px 'Liberation Mono', monospace;color:#080808;letter-spacing:-1.20px;-webkit-text-stroke:0.35px;">            ],</span>
<span class="t" style="left:656.60px;top:661.00px;font:400 28px/28px 'Liberation Mono', monospace;color:#adadad;letter-spacing:-1.20px;">17</span>
<span class="t" style="left:776.90px;top:661.00px;font:400 28px/28px 'Liberation Mono', monospace;color:#080808;letter-spacing:-1.20px;-webkit-text-stroke:0.35px;">            <span style="color:#660099">direction</span>=Direction.RIGHT,</span>
<span class="t" style="left:656.60px;top:705.00px;font:400 28px/28px 'Liberation Mono', monospace;color:#adadad;letter-spacing:-1.20px;">18</span>
<span class="t" style="left:776.90px;top:705.00px;font:400 28px/28px 'Liberation Mono', monospace;color:#080808;letter-spacing:-1.20px;-webkit-text-stroke:0.35px;">            <span style="color:#660099">food</span>=Position(<span style="color:#1750eb">10</span>, <span style="color:#1750eb">10</span>),</span>
<span class="t" style="left:656.60px;top:749.00px;font:400 28px/28px 'Liberation Mono', monospace;color:#adadad;letter-spacing:-1.20px;">19</span>
<span class="t" style="left:776.90px;top:749.00px;font:400 28px/28px 'Liberation Mono', monospace;color:#080808;letter-spacing:-1.20px;-webkit-text-stroke:0.35px;">            <span style="color:#660099">field_size</span>=<span style="color:#1750eb">20</span>,</span>
<span class="t" style="left:656.60px;top:793.00px;font:400 28px/28px 'Liberation Mono', monospace;color:#adadad;letter-spacing:-1.20px;">20</span>
<span class="t" style="left:776.90px;top:793.00px;font:400 28px/28px 'Liberation Mono', monospace;color:#080808;letter-spacing:-1.20px;-webkit-text-stroke:0.35px;">        )</span>
<span class="t" style="left:656.60px;top:837.00px;font:400 28px/28px 'Liberation Mono', monospace;color:#adadad;letter-spacing:-1.20px;">21</span>
<span class="t" style="left:656.60px;top:881.00px;font:400 28px/28px 'Liberation Mono', monospace;color:#adadad;letter-spacing:-1.20px;">22</span>
<span class="t" style="left:776.90px;top:881.00px;font:400 28px/28px 'Liberation Mono', monospace;color:#080808;letter-spacing:-1.20px;-webkit-text-stroke:0.35px;">        state.step()</span>
<span class="t" style="left:656.60px;top:925.00px;font:400 28px/28px 'Liberation Mono', monospace;color:#adadad;letter-spacing:-1.20px;">23</span>
<span class="t" style="left:656.60px;top:969.00px;font:400 28px/28px 'Liberation Mono', monospace;color:#adadad;letter-spacing:-1.20px;">24</span>
<span class="t" style="left:776.90px;top:969.00px;font:400 28px/28px 'Liberation Mono', monospace;color:#080808;letter-spacing:-1.20px;-webkit-text-stroke:0.35px;">        expected_state = [Position(<span style="color:#1750eb">1</span>, <span style="color:#1750eb">3</span>), Position(<span style="color:#1750eb">1</span>, <span style="color:#1750eb">4</span>), Position(<span style="color:#1750eb">2</span>, <span style="color:#1750eb">4</span>)]</span>
<span class="t" style="left:656.60px;top:1013.00px;font:400 28px/28px 'Liberation Mono', monospace;color:#adadad;letter-spacing:-1.20px;">25</span>
<span class="t" style="left:776.90px;top:1013.00px;font:400 28px/28px 'Liberation Mono', monospace;color:#080808;letter-spacing:-1.20px;-webkit-text-stroke:0.35px;">        <span style="color:#94558d">self</span>.assertEqual(expected_state, state.snake)</span>
<span class="t" style="left:656.60px;top:1057.00px;font:400 28px/28px 'Liberation Mono', monospace;color:#adadad;letter-spacing:-1.20px;">26</span>
<span class="t" style="left:785.50px;top:1097.01px;font:400 22.4px/22.4px 'Liberation Sans', sans-serif;color:#636363;letter-spacing:1.200px;">GameStateTest</span>
<span class="t" style="left:1002.00px;top:1097.01px;font:400 22.4px/22.4px 'Liberation Sans', sans-serif;color:#636363;letter-spacing:1.145px;">test_snake_should_move_up_on_to...</span>
<span class="t" style="left:166.10px;top:1146.00px;font:400 23.8px/23.8px 'Liberation Sans', sans-serif;color:#000;letter-spacing:0.315px;">Run:</span>
<span class="t" style="left:296.60px;top:1146.00px;font:400 23.8px/23.8px 'Liberation Sans', sans-serif;color:#000;letter-spacing:0.616px;">Python tests for GameStateTest.GameStateTest.test_snake_s...</span>
<span class="t" style="left:983.00px;top:1198.00px;font:400 26px/26px 'Liberation Sans', sans-serif;color:#a9291a;letter-spacing:0.606px;">Tests failed: 1</span>
<span class="t" style="left:1159.00px;top:1198.00px;font:400 26px/26px 'Liberation Sans', sans-serif;color:#999;letter-spacing:0.628px;">of 1 test –</span>
<span class="t" style="left:1289.00px;top:1198.00px;font:400 26px/26px 'Liberation Sans', sans-serif;color:#808080;letter-spacing:-0.114px;">6 ms</span>
<span class="t" style="left:297.10px;top:1250.01px;font:400 25.5px/25.5px 'Liberation Sans', sans-serif;color:#000;letter-spacing:0.952px;">Test Results</span>
<span class="t" style="left:332.20px;top:1290.01px;font:400 25.5px/25.5px 'Liberation Sans', sans-serif;color:#000;letter-spacing:0.728px;">GameStateTest</span>
<span class="t" style="left:368.00px;top:1330.01px;font:400 25.5px/25.5px 'Liberation Sans', sans-serif;color:#000;letter-spacing:0.745px;">GameStateTest</span>
<span class="t" style="left:405.00px;top:1370.01px;font:400 25.5px/25.5px 'Liberation Sans', sans-serif;color:#000;letter-spacing:1.221px;">test_snake_should_move_down</span>
<span class="t" style="left:877.80px;top:1250.01px;font:400 24px/24px 'Liberation Sans', sans-serif;color:#000;letter-spacing:-0.136px;">6 ms</span>
<span class="t" style="left:877.80px;top:1290.01px;font:400 24px/24px 'Liberation Sans', sans-serif;color:#999;letter-spacing:-0.136px;">6 ms</span>
<span class="t" style="left:877.80px;top:1330.01px;font:400 24px/24px 'Liberation Sans', sans-serif;color:#999;letter-spacing:-0.136px;">6 ms</span>
<span class="t" style="left:877.80px;top:1370.01px;font:400 24px/24px 'Liberation Sans', sans-serif;color:#999;letter-spacing:-0.136px;">6 ms</span>
<span class="t" style="left:965.60px;top:1292.00px;font:400 28px/28px 'Liberation Mono', monospace;color:#080808;letter-spacing:-1.20px;-webkit-text-stroke:0.35px;"><span style="color:#8b1414">[(1, 2), (1, 3), (1, 4)] != [(1, 3), (1, 4), (1, 5)]</span></span>
<span class="t" style="left:965.60px;top:1380.00px;font:400 28px/28px 'Liberation Mono', monospace;color:#080808;letter-spacing:-1.20px;-webkit-text-stroke:0.35px;"><span style="color:#00007f">Expected :</span><span style="color:#8b1414">[(1, 3), (1, 4), (1, 5)]</span></span>
<span class="t" style="left:965.60px;top:1424.00px;font:400 28px/28px 'Liberation Mono', monospace;color:#080808;letter-spacing:-1.20px;-webkit-text-stroke:0.35px;"><span style="color:#00007f">Actual   :</span><span style="color:#8b1414">[(1, 2), (1, 3), (1, 4)]</span></span>
<span class="t" style="left:965.60px;top:1468.00px;font:400 28px/28px 'Liberation Mono', monospace;color:#080808;letter-spacing:-1.20px;-webkit-text-stroke:0.35px;color:#2470d8;text-decoration:underline;text-decoration-thickness:2px;text-underline-offset:3px;">&lt;Click to see difference&gt;</span>
<span class="t" style="left:204.00px;top:1583.01px;font:400 22.4px/22.4px 'Liberation Sans', sans-serif;color:#000;letter-spacing:-0.495px;">Git</span>
<span class="t" style="left:306.20px;top:1583.01px;font:400 22.4px/22.4px 'Liberation Sans', sans-serif;color:#000;letter-spacing:-0.711px;">Run</span>
<span class="t" style="left:416.80px;top:1583.01px;font:400 22.4px/22.4px 'Liberation Sans', sans-serif;color:#000;letter-spacing:-1.286px;">TODO</span>
<span class="t" style="left:551.40px;top:1583.01px;font:400 22.4px/22.4px 'Liberation Sans', sans-serif;color:#000;letter-spacing:0.032px;">Problems</span>
<span class="t" style="left:727.60px;top:1583.01px;font:400 22.4px/22.4px 'Liberation Sans', sans-serif;color:#000;letter-spacing:-0.019px;">Python Packages</span>
<span class="t" style="left:985.70px;top:1583.01px;font:400 22.4px/22.4px 'Liberation Sans', sans-serif;color:#000;letter-spacing:0.129px;">Python Console</span>
<span class="t" style="left:1225.00px;top:1583.01px;font:400 22.4px/22.4px 'Liberation Sans', sans-serif;color:#000;letter-spacing:-0.091px;">Terminal</span>
<span class="t" style="left:1858.50px;top:1587.01px;font:700 18px/18px 'Liberation Sans', sans-serif;color:#fff;">1</span>
<span class="t" style="left:1886.00px;top:1583.01px;font:400 22.4px/22.4px 'Liberation Sans', sans-serif;color:#000;letter-spacing:-0.085px;">Event Log</span>
<span class="t" style="left:175.40px;top:1625.01px;font:400 22.4px/22.4px 'Liberation Sans', sans-serif;color:#000;letter-spacing:-0.014px;">Tests failed: 1, passed: 0 (a minute ago)</span>
<span class="t" style="left:1411.90px;top:1625.01px;font:400 22.4px/22.4px 'Liberation Sans', sans-serif;color:#000;letter-spacing:-1.209px;">91:1</span>
<span class="t" style="left:1475.70px;top:1625.01px;font:400 22.4px/22.4px 'Liberation Sans', sans-serif;color:#000;letter-spacing:-1.153px;">LF</span>
<span class="t" style="left:1523.80px;top:1625.01px;font:400 22.4px/22.4px 'Liberation Sans', sans-serif;color:#000;letter-spacing:0.555px;">UTF-8</span>
<span class="t" style="left:1614.80px;top:1625.01px;font:400 22.4px/22.4px 'Liberation Sans', sans-serif;color:#000;letter-spacing:0.083px;">4 spaces</span>
<span class="t" style="left:1730.00px;top:1625.01px;font:400 22.4px/22.4px 'Liberation Sans', sans-serif;color:#000;letter-spacing:-0.046px;">Python 3.10</span>
<span class="t" style="left:1907.60px;top:1625.01px;font:400 22.4px/22.4px 'Liberation Sans', sans-serif;color:#000;letter-spacing:0.205px;">master</span>
<span class="t" style="left:1568.00px;top:150.02px;font:400 22.4px/22.4px 'Liberation Sans', sans-serif;color:#000;letter-spacing:0.430px;">Git:</span>
</div></body></html>
